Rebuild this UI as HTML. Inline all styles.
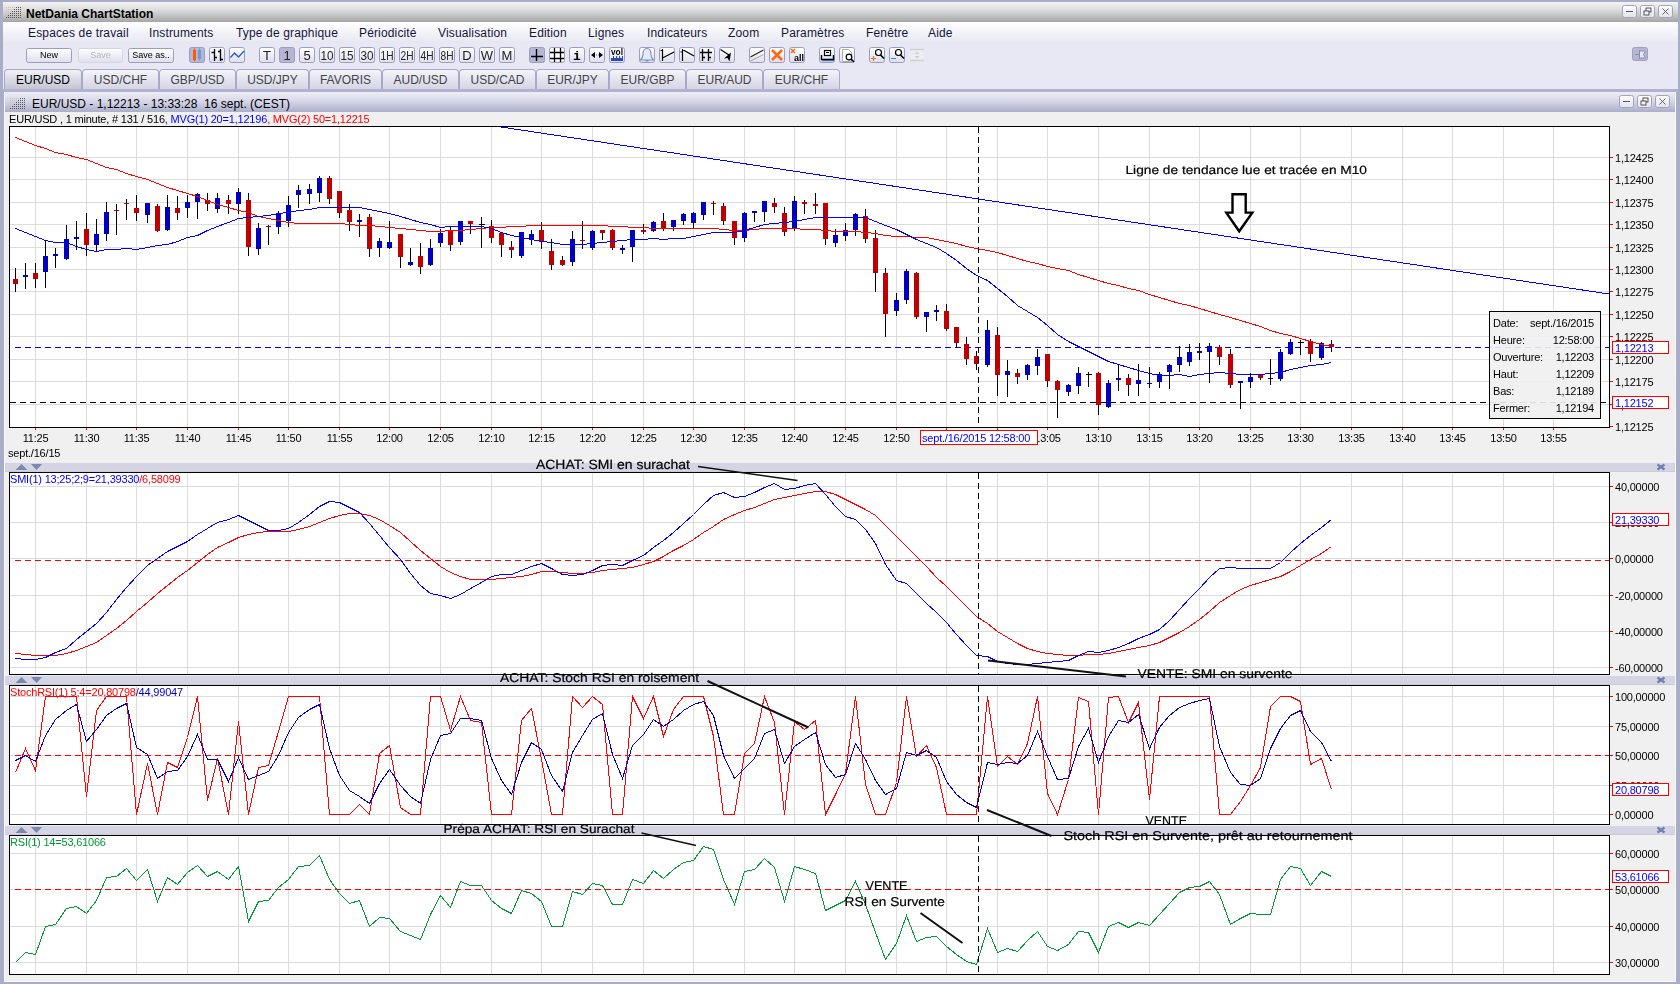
<!DOCTYPE html>
<html><head><meta charset="utf-8"><title>NetDania ChartStation</title>
<style>
html,body{margin:0;padding:0}
body{width:1680px;height:984px;position:relative;overflow:hidden;background:#a9adc8;font-family:"Liberation Sans",Arial,sans-serif}
#title{position:absolute;left:3px;top:2px;width:1675px;height:20px;background:linear-gradient(#f4f4f4,#dcdcdc 40%,#a6a6a6)}
#title b{position:absolute;left:23px;top:5px;font-size:12px;color:#000}
#menu{position:absolute;left:3px;top:22px;width:1675px;height:22px;background:linear-gradient(#ffffff,#e6e6f2)}
#menu span{position:absolute;margin-left:-3px;top:4px;font-size:12px;color:#15153a;white-space:nowrap;letter-spacing:0.15px}
#tool{position:absolute;left:3px;top:44px;width:1675px;height:48px;background:#e8e8f4}
.tab{position:absolute;top:69px;width:76px;height:20px;box-sizing:border-box;border:1px solid #a9a9c7;border-bottom:none;border-radius:4px 4px 0 0;background:linear-gradient(#f4f4fa,#d4d4e6);font-size:12px;color:#444;text-align:center;line-height:20px}
.tab.act{background:linear-gradient(#f0f0f4,#c4c4d6);color:#000}
#tabline{position:absolute;left:3px;top:89px;width:1675px;height:3px;background:#b0b2d0}
#win{position:absolute;left:4px;top:92px;width:1670px;height:889px;background:#f0f0f0;border:1px solid #f8f8fc;border-top:none}
#wtitle{position:absolute;left:0;top:0;width:1670px;height:20px;background:linear-gradient(#eeeef8,#d4d4e6 50%,#aaaeca)}
#wtitle span{position:absolute;left:27px;top:5px;font-size:12px;color:#000;white-space:pre}
.btn{position:absolute;top:48px;height:14px;box-sizing:border-box;border:1px solid #9c9cba;border-radius:2px;background:linear-gradient(#fff,#e4e4f2);font-size:9px;line-height:12px;text-align:center;color:#000}
.ib{position:absolute;top:47px;width:16px;height:16px;box-sizing:border-box;border:1px solid #a4a4c0;border-radius:2px;background:linear-gradient(#fff,#e0e0ee);font-size:12px;line-height:14px;text-align:center;color:#222}
.ib.sel{background:#b4b4d0;border-color:#9090b0}
</style></head><body>
<div id="title"><b>NetDania ChartStation</b></div>
<div id="menu"><span style="left:28px">Espaces de travail</span><span style="left:149px">Instruments</span><span style="left:236px">Type de graphique</span><span style="left:359px">Périodicité</span><span style="left:438px">Visualisation</span><span style="left:529px">Edition</span><span style="left:588px">Lignes</span><span style="left:647px">Indicateurs</span><span style="left:728px">Zoom</span><span style="left:781px">Paramètres</span><span style="left:866px">Fenêtre</span><span style="left:928px">Aide</span></div>
<div id="tool"></div>
<div class="tab act" style="left:4px;width:78px">EUR/USD</div><div class="tab" style="left:82px;width:77px">USD/CHF</div><div class="tab" style="left:159px;width:77px">GBP/USD</div><div class="tab" style="left:236px;width:73px">USD/JPY</div><div class="tab" style="left:309px;width:73px">FAVORIS</div><div class="tab" style="left:382px;width:77px">AUD/USD</div><div class="tab" style="left:459px;width:77px">USD/CAD</div><div class="tab" style="left:536px;width:73px">EUR/JPY</div><div class="tab" style="left:609px;width:77px">EUR/GBP</div><div class="tab" style="left:686px;width:77px">EUR/AUD</div><div class="tab" style="left:763px;width:77px">EUR/CHF</div>
<div id="tabline"></div>
<div id="win"><div id="wtitle"><span>EUR/USD - 1,12213 - 13:33:28  16 sept. (CEST)</span></div></div>
<svg width="1680" height="984" viewBox="0 0 1680 984" style="position:absolute;left:0;top:0;will-change:transform" shape-rendering="crispEdges" font-family="Liberation Sans, Arial, sans-serif">
<style>.t{font-size:11px;fill:#000;letter-spacing:-0.2px}.an{font-size:12.5px;fill:#000;stroke:#000;stroke-width:0.2px;font-family:"Liberation Sans",sans-serif}</style>
<rect x="9.5" y="126.5" width="1600" height="301" fill="#fff" stroke="none"/>
<line x1="35.5" y1="127" x2="35.5" y2="427" stroke="#dcdcdc" stroke-width="1"/>
<line x1="86.5" y1="127" x2="86.5" y2="427" stroke="#dcdcdc" stroke-width="1"/>
<line x1="136.5" y1="127" x2="136.5" y2="427" stroke="#dcdcdc" stroke-width="1"/>
<line x1="187.5" y1="127" x2="187.5" y2="427" stroke="#dcdcdc" stroke-width="1"/>
<line x1="238.5" y1="127" x2="238.5" y2="427" stroke="#dcdcdc" stroke-width="1"/>
<line x1="288.5" y1="127" x2="288.5" y2="427" stroke="#dcdcdc" stroke-width="1"/>
<line x1="339.5" y1="127" x2="339.5" y2="427" stroke="#dcdcdc" stroke-width="1"/>
<line x1="389.5" y1="127" x2="389.5" y2="427" stroke="#dcdcdc" stroke-width="1"/>
<line x1="440.5" y1="127" x2="440.5" y2="427" stroke="#dcdcdc" stroke-width="1"/>
<line x1="491.5" y1="127" x2="491.5" y2="427" stroke="#dcdcdc" stroke-width="1"/>
<line x1="541.5" y1="127" x2="541.5" y2="427" stroke="#dcdcdc" stroke-width="1"/>
<line x1="592.5" y1="127" x2="592.5" y2="427" stroke="#dcdcdc" stroke-width="1"/>
<line x1="643.5" y1="127" x2="643.5" y2="427" stroke="#dcdcdc" stroke-width="1"/>
<line x1="693.5" y1="127" x2="693.5" y2="427" stroke="#dcdcdc" stroke-width="1"/>
<line x1="744.5" y1="127" x2="744.5" y2="427" stroke="#dcdcdc" stroke-width="1"/>
<line x1="794.5" y1="127" x2="794.5" y2="427" stroke="#dcdcdc" stroke-width="1"/>
<line x1="845.5" y1="127" x2="845.5" y2="427" stroke="#dcdcdc" stroke-width="1"/>
<line x1="896.5" y1="127" x2="896.5" y2="427" stroke="#dcdcdc" stroke-width="1"/>
<line x1="946.5" y1="127" x2="946.5" y2="427" stroke="#dcdcdc" stroke-width="1"/>
<line x1="997.5" y1="127" x2="997.5" y2="427" stroke="#dcdcdc" stroke-width="1"/>
<line x1="1047.5" y1="127" x2="1047.5" y2="427" stroke="#dcdcdc" stroke-width="1"/>
<line x1="1098.5" y1="127" x2="1098.5" y2="427" stroke="#dcdcdc" stroke-width="1"/>
<line x1="1149.5" y1="127" x2="1149.5" y2="427" stroke="#dcdcdc" stroke-width="1"/>
<line x1="1199.5" y1="127" x2="1199.5" y2="427" stroke="#dcdcdc" stroke-width="1"/>
<line x1="1250.5" y1="127" x2="1250.5" y2="427" stroke="#dcdcdc" stroke-width="1"/>
<line x1="1300.5" y1="127" x2="1300.5" y2="427" stroke="#dcdcdc" stroke-width="1"/>
<line x1="1351.5" y1="127" x2="1351.5" y2="427" stroke="#dcdcdc" stroke-width="1"/>
<line x1="1402.5" y1="127" x2="1402.5" y2="427" stroke="#dcdcdc" stroke-width="1"/>
<line x1="1452.5" y1="127" x2="1452.5" y2="427" stroke="#dcdcdc" stroke-width="1"/>
<line x1="1503.5" y1="127" x2="1503.5" y2="427" stroke="#dcdcdc" stroke-width="1"/>
<line x1="1553.5" y1="127" x2="1553.5" y2="427" stroke="#dcdcdc" stroke-width="1"/>
<line x1="10" y1="157.5" x2="1609" y2="157.5" stroke="#dcdcdc" stroke-width="1"/>
<line x1="10" y1="179.5" x2="1609" y2="179.5" stroke="#dcdcdc" stroke-width="1"/>
<line x1="10" y1="202.5" x2="1609" y2="202.5" stroke="#dcdcdc" stroke-width="1"/>
<line x1="10" y1="224.5" x2="1609" y2="224.5" stroke="#dcdcdc" stroke-width="1"/>
<line x1="10" y1="247.5" x2="1609" y2="247.5" stroke="#dcdcdc" stroke-width="1"/>
<line x1="10" y1="269.5" x2="1609" y2="269.5" stroke="#dcdcdc" stroke-width="1"/>
<line x1="10" y1="291.5" x2="1609" y2="291.5" stroke="#dcdcdc" stroke-width="1"/>
<line x1="10" y1="314.5" x2="1609" y2="314.5" stroke="#dcdcdc" stroke-width="1"/>
<line x1="10" y1="336.5" x2="1609" y2="336.5" stroke="#dcdcdc" stroke-width="1"/>
<line x1="10" y1="359.5" x2="1609" y2="359.5" stroke="#dcdcdc" stroke-width="1"/>
<line x1="10" y1="381.5" x2="1609" y2="381.5" stroke="#dcdcdc" stroke-width="1"/>
<line x1="10" y1="404.5" x2="1609" y2="404.5" stroke="#dcdcdc" stroke-width="1"/>
<line x1="501" y1="127" x2="1609" y2="294" stroke="#0000ff" stroke-width="1"/>
<line x1="15" y1="347.5" x2="1609" y2="347.5" stroke="#0000ff" stroke-width="1" stroke-dasharray="6 4"/>
<line x1="10" y1="402.5" x2="1609" y2="402.5" stroke="#000" stroke-width="1" stroke-dasharray="6 4"/>
<line x1="15.5" y1="268" x2="15.5" y2="292" stroke="#000" stroke-width="1"/>
<rect x="13" y="279" width="5" height="5" fill="#c00000"/>
<line x1="25.5" y1="263" x2="25.5" y2="289" stroke="#000" stroke-width="1"/>
<rect x="23" y="275" width="5" height="2" fill="#0000c0"/>
<line x1="35.5" y1="263" x2="35.5" y2="288" stroke="#000" stroke-width="1"/>
<rect x="33" y="273" width="5" height="6" fill="#c00000"/>
<line x1="45.5" y1="241" x2="45.5" y2="288" stroke="#000" stroke-width="1"/>
<rect x="43" y="256" width="5" height="16" fill="#0000c0"/>
<line x1="55.5" y1="248" x2="55.5" y2="268" stroke="#000" stroke-width="1"/>
<rect x="53" y="254" width="5" height="2" fill="#0000c0"/>
<line x1="66.5" y1="225" x2="66.5" y2="260" stroke="#000" stroke-width="1"/>
<rect x="64" y="239" width="5" height="20" fill="#0000c0"/>
<line x1="76.5" y1="221" x2="76.5" y2="250" stroke="#000" stroke-width="1"/>
<rect x="74" y="237" width="5" height="2" fill="#0000c0"/>
<line x1="86.5" y1="213" x2="86.5" y2="256" stroke="#000" stroke-width="1"/>
<rect x="84" y="229" width="5" height="16" fill="#c00000"/>
<line x1="96.5" y1="219" x2="96.5" y2="252" stroke="#000" stroke-width="1"/>
<rect x="94" y="234" width="5" height="11" fill="#0000c0"/>
<line x1="106.5" y1="202" x2="106.5" y2="241" stroke="#000" stroke-width="1"/>
<rect x="104" y="212" width="5" height="22" fill="#0000c0"/>
<line x1="116.5" y1="204" x2="116.5" y2="235" stroke="#000" stroke-width="1"/>
<rect x="114" y="210" width="5" height="1" fill="#c00000"/>
<line x1="126.5" y1="199" x2="126.5" y2="220" stroke="#000" stroke-width="1"/>
<rect x="124" y="203" width="5" height="1" fill="#c00000"/>
<line x1="136.5" y1="195" x2="136.5" y2="221" stroke="#000" stroke-width="1"/>
<rect x="134" y="208" width="5" height="5" fill="#c00000"/>
<line x1="147.5" y1="203" x2="147.5" y2="223" stroke="#000" stroke-width="1"/>
<rect x="145" y="203" width="5" height="12" fill="#0000c0"/>
<line x1="157.5" y1="204" x2="157.5" y2="232" stroke="#000" stroke-width="1"/>
<rect x="155" y="206" width="5" height="25" fill="#c00000"/>
<line x1="167.5" y1="195" x2="167.5" y2="231" stroke="#000" stroke-width="1"/>
<rect x="165" y="207" width="5" height="23" fill="#0000c0"/>
<line x1="177.5" y1="196" x2="177.5" y2="220" stroke="#000" stroke-width="1"/>
<rect x="175" y="208" width="5" height="5" fill="#c00000"/>
<line x1="187.5" y1="195" x2="187.5" y2="218" stroke="#000" stroke-width="1"/>
<rect x="185" y="202" width="5" height="6" fill="#0000c0"/>
<line x1="197.5" y1="193" x2="197.5" y2="219" stroke="#000" stroke-width="1"/>
<rect x="195" y="194" width="5" height="8" fill="#0000c0"/>
<line x1="207.5" y1="193" x2="207.5" y2="211" stroke="#000" stroke-width="1"/>
<rect x="205" y="200" width="5" height="4" fill="#c00000"/>
<line x1="217.5" y1="193" x2="217.5" y2="213" stroke="#000" stroke-width="1"/>
<rect x="215" y="198" width="5" height="11" fill="#0000c0"/>
<line x1="228.5" y1="195" x2="228.5" y2="214" stroke="#000" stroke-width="1"/>
<rect x="226" y="200" width="5" height="4" fill="#c00000"/>
<line x1="238.5" y1="188" x2="238.5" y2="214" stroke="#000" stroke-width="1"/>
<rect x="236" y="192" width="5" height="12" fill="#0000c0"/>
<line x1="248.5" y1="193" x2="248.5" y2="256" stroke="#000" stroke-width="1"/>
<rect x="246" y="200" width="5" height="47" fill="#c00000"/>
<line x1="258.5" y1="223" x2="258.5" y2="255" stroke="#000" stroke-width="1"/>
<rect x="256" y="228" width="5" height="21" fill="#0000c0"/>
<line x1="268.5" y1="225" x2="268.5" y2="245" stroke="#000" stroke-width="1"/>
<rect x="266" y="226" width="5" height="1" fill="#c00000"/>
<line x1="278.5" y1="211" x2="278.5" y2="234" stroke="#000" stroke-width="1"/>
<rect x="276" y="213" width="5" height="14" fill="#0000c0"/>
<line x1="288.5" y1="196" x2="288.5" y2="227" stroke="#000" stroke-width="1"/>
<rect x="286" y="205" width="5" height="16" fill="#0000c0"/>
<line x1="298.5" y1="185" x2="298.5" y2="208" stroke="#000" stroke-width="1"/>
<rect x="296" y="190" width="5" height="5" fill="#0000c0"/>
<line x1="309.5" y1="184" x2="309.5" y2="204" stroke="#000" stroke-width="1"/>
<rect x="307" y="189" width="5" height="5" fill="#0000c0"/>
<line x1="319.5" y1="176" x2="319.5" y2="202" stroke="#000" stroke-width="1"/>
<rect x="317" y="178" width="5" height="15" fill="#0000c0"/>
<line x1="329.5" y1="176" x2="329.5" y2="204" stroke="#000" stroke-width="1"/>
<rect x="327" y="178" width="5" height="21" fill="#c00000"/>
<line x1="339.5" y1="191" x2="339.5" y2="218" stroke="#000" stroke-width="1"/>
<rect x="337" y="191" width="5" height="22" fill="#c00000"/>
<line x1="349.5" y1="204" x2="349.5" y2="231" stroke="#000" stroke-width="1"/>
<rect x="347" y="210" width="5" height="12" fill="#c00000"/>
<line x1="359.5" y1="214" x2="359.5" y2="237" stroke="#000" stroke-width="1"/>
<rect x="357" y="220" width="5" height="2" fill="#0000c0"/>
<line x1="369.5" y1="214" x2="369.5" y2="257" stroke="#000" stroke-width="1"/>
<rect x="367" y="217" width="5" height="32" fill="#c00000"/>
<line x1="379.5" y1="238" x2="379.5" y2="257" stroke="#000" stroke-width="1"/>
<rect x="377" y="241" width="5" height="7" fill="#0000c0"/>
<line x1="389.5" y1="221" x2="389.5" y2="249" stroke="#000" stroke-width="1"/>
<rect x="387" y="242" width="5" height="6" fill="#0000c0"/>
<line x1="400.5" y1="234" x2="400.5" y2="268" stroke="#000" stroke-width="1"/>
<rect x="398" y="234" width="5" height="23" fill="#c00000"/>
<line x1="410.5" y1="248" x2="410.5" y2="266" stroke="#000" stroke-width="1"/>
<rect x="408" y="262" width="5" height="3" fill="#0000c0"/>
<line x1="420.5" y1="243" x2="420.5" y2="274" stroke="#000" stroke-width="1"/>
<rect x="418" y="256" width="5" height="11" fill="#c00000"/>
<line x1="430.5" y1="239" x2="430.5" y2="266" stroke="#000" stroke-width="1"/>
<rect x="428" y="248" width="5" height="17" fill="#0000c0"/>
<line x1="440.5" y1="229" x2="440.5" y2="247" stroke="#000" stroke-width="1"/>
<rect x="438" y="233" width="5" height="10" fill="#0000c0"/>
<line x1="450.5" y1="226" x2="450.5" y2="251" stroke="#000" stroke-width="1"/>
<rect x="448" y="230" width="5" height="15" fill="#c00000"/>
<line x1="460.5" y1="221" x2="460.5" y2="245" stroke="#000" stroke-width="1"/>
<rect x="458" y="221" width="5" height="21" fill="#0000c0"/>
<line x1="470.5" y1="221" x2="470.5" y2="234" stroke="#000" stroke-width="1"/>
<rect x="468" y="221" width="5" height="3" fill="#c00000"/>
<line x1="481.5" y1="217" x2="481.5" y2="248" stroke="#000" stroke-width="1"/>
<line x1="479" y1="224.5" x2="485" y2="224.5" stroke="#000" stroke-width="1"/>
<line x1="491.5" y1="220" x2="491.5" y2="243" stroke="#000" stroke-width="1"/>
<rect x="489" y="226" width="5" height="12" fill="#c00000"/>
<line x1="501.5" y1="232" x2="501.5" y2="257" stroke="#000" stroke-width="1"/>
<rect x="499" y="233" width="5" height="12" fill="#c00000"/>
<line x1="511.5" y1="241" x2="511.5" y2="258" stroke="#000" stroke-width="1"/>
<rect x="509" y="247" width="5" height="3" fill="#c00000"/>
<line x1="521.5" y1="232" x2="521.5" y2="258" stroke="#000" stroke-width="1"/>
<rect x="519" y="232" width="5" height="24" fill="#0000c0"/>
<line x1="531.5" y1="230" x2="531.5" y2="245" stroke="#000" stroke-width="1"/>
<rect x="529" y="234" width="5" height="6" fill="#0000c0"/>
<line x1="541.5" y1="222" x2="541.5" y2="249" stroke="#000" stroke-width="1"/>
<rect x="539" y="230" width="5" height="12" fill="#c00000"/>
<line x1="551.5" y1="239" x2="551.5" y2="270" stroke="#000" stroke-width="1"/>
<rect x="549" y="251" width="5" height="14" fill="#c00000"/>
<line x1="562.5" y1="256" x2="562.5" y2="266" stroke="#000" stroke-width="1"/>
<rect x="560" y="260" width="5" height="5" fill="#c00000"/>
<line x1="572.5" y1="231" x2="572.5" y2="266" stroke="#000" stroke-width="1"/>
<rect x="570" y="239" width="5" height="23" fill="#0000c0"/>
<line x1="582.5" y1="221" x2="582.5" y2="249" stroke="#000" stroke-width="1"/>
<rect x="580" y="240" width="5" height="1" fill="#c00000"/>
<line x1="592.5" y1="230" x2="592.5" y2="250" stroke="#000" stroke-width="1"/>
<rect x="590" y="231" width="5" height="17" fill="#0000c0"/>
<line x1="602.5" y1="230" x2="602.5" y2="240" stroke="#000" stroke-width="1"/>
<rect x="600" y="230" width="5" height="3" fill="#c00000"/>
<line x1="612.5" y1="229" x2="612.5" y2="250" stroke="#000" stroke-width="1"/>
<rect x="610" y="230" width="5" height="18" fill="#c00000"/>
<line x1="622.5" y1="245" x2="622.5" y2="254" stroke="#000" stroke-width="1"/>
<rect x="620" y="248" width="5" height="2" fill="#0000c0"/>
<line x1="632.5" y1="230" x2="632.5" y2="262" stroke="#000" stroke-width="1"/>
<rect x="630" y="230" width="5" height="17" fill="#0000c0"/>
<line x1="643.5" y1="224" x2="643.5" y2="234" stroke="#000" stroke-width="1"/>
<rect x="641" y="230" width="5" height="2" fill="#c00000"/>
<line x1="653.5" y1="221" x2="653.5" y2="232" stroke="#000" stroke-width="1"/>
<rect x="651" y="222" width="5" height="9" fill="#0000c0"/>
<line x1="663.5" y1="213" x2="663.5" y2="231" stroke="#000" stroke-width="1"/>
<rect x="661" y="221" width="5" height="8" fill="#c00000"/>
<line x1="673.5" y1="220" x2="673.5" y2="231" stroke="#000" stroke-width="1"/>
<rect x="671" y="220" width="5" height="7" fill="#0000c0"/>
<line x1="683.5" y1="213" x2="683.5" y2="225" stroke="#000" stroke-width="1"/>
<rect x="681" y="214" width="5" height="7" fill="#0000c0"/>
<line x1="693.5" y1="212" x2="693.5" y2="228" stroke="#000" stroke-width="1"/>
<rect x="691" y="213" width="5" height="10" fill="#0000c0"/>
<line x1="703.5" y1="202" x2="703.5" y2="220" stroke="#000" stroke-width="1"/>
<rect x="701" y="202" width="5" height="13" fill="#0000c0"/>
<line x1="713.5" y1="201" x2="713.5" y2="215" stroke="#000" stroke-width="1"/>
<rect x="711" y="203" width="5" height="1" fill="#c00000"/>
<line x1="723.5" y1="203" x2="723.5" y2="225" stroke="#000" stroke-width="1"/>
<rect x="721" y="206" width="5" height="15" fill="#c00000"/>
<line x1="734.5" y1="221" x2="734.5" y2="245" stroke="#000" stroke-width="1"/>
<rect x="732" y="221" width="5" height="17" fill="#c00000"/>
<line x1="744.5" y1="212" x2="744.5" y2="242" stroke="#000" stroke-width="1"/>
<rect x="742" y="213" width="5" height="25" fill="#0000c0"/>
<line x1="754.5" y1="211" x2="754.5" y2="222" stroke="#000" stroke-width="1"/>
<rect x="752" y="211" width="5" height="2" fill="#0000c0"/>
<line x1="764.5" y1="201" x2="764.5" y2="222" stroke="#000" stroke-width="1"/>
<rect x="762" y="201" width="5" height="11" fill="#0000c0"/>
<line x1="774.5" y1="198" x2="774.5" y2="213" stroke="#000" stroke-width="1"/>
<rect x="772" y="203" width="5" height="4" fill="#c00000"/>
<line x1="784.5" y1="207" x2="784.5" y2="236" stroke="#000" stroke-width="1"/>
<rect x="782" y="213" width="5" height="19" fill="#c00000"/>
<line x1="794.5" y1="196" x2="794.5" y2="231" stroke="#000" stroke-width="1"/>
<rect x="792" y="201" width="5" height="27" fill="#0000c0"/>
<line x1="804.5" y1="200" x2="804.5" y2="214" stroke="#000" stroke-width="1"/>
<rect x="802" y="202" width="5" height="2" fill="#c00000"/>
<line x1="815.5" y1="193" x2="815.5" y2="214" stroke="#000" stroke-width="1"/>
<rect x="813" y="204" width="5" height="2" fill="#c00000"/>
<line x1="825.5" y1="203" x2="825.5" y2="245" stroke="#000" stroke-width="1"/>
<rect x="823" y="203" width="5" height="36" fill="#c00000"/>
<line x1="835.5" y1="229" x2="835.5" y2="247" stroke="#000" stroke-width="1"/>
<rect x="833" y="235" width="5" height="8" fill="#0000c0"/>
<line x1="845.5" y1="223" x2="845.5" y2="241" stroke="#000" stroke-width="1"/>
<rect x="843" y="230" width="5" height="6" fill="#0000c0"/>
<line x1="855.5" y1="213" x2="855.5" y2="236" stroke="#000" stroke-width="1"/>
<rect x="853" y="214" width="5" height="16" fill="#0000c0"/>
<line x1="865.5" y1="209" x2="865.5" y2="243" stroke="#000" stroke-width="1"/>
<rect x="863" y="216" width="5" height="23" fill="#c00000"/>
<line x1="875.5" y1="230" x2="875.5" y2="292" stroke="#000" stroke-width="1"/>
<rect x="873" y="238" width="5" height="35" fill="#c00000"/>
<line x1="885.5" y1="268" x2="885.5" y2="337" stroke="#000" stroke-width="1"/>
<rect x="883" y="273" width="5" height="41" fill="#c00000"/>
<line x1="896.5" y1="293" x2="896.5" y2="316" stroke="#000" stroke-width="1"/>
<rect x="894" y="300" width="5" height="11" fill="#0000c0"/>
<line x1="906.5" y1="269" x2="906.5" y2="304" stroke="#000" stroke-width="1"/>
<rect x="904" y="271" width="5" height="29" fill="#0000c0"/>
<line x1="916.5" y1="272" x2="916.5" y2="319" stroke="#000" stroke-width="1"/>
<rect x="914" y="273" width="5" height="44" fill="#c00000"/>
<line x1="926.5" y1="312" x2="926.5" y2="332" stroke="#000" stroke-width="1"/>
<rect x="924" y="312" width="5" height="5" fill="#0000c0"/>
<line x1="936.5" y1="305" x2="936.5" y2="321" stroke="#000" stroke-width="1"/>
<rect x="934" y="310" width="5" height="2" fill="#0000c0"/>
<line x1="946.5" y1="304" x2="946.5" y2="331" stroke="#000" stroke-width="1"/>
<rect x="944" y="311" width="5" height="18" fill="#c00000"/>
<line x1="956.5" y1="327" x2="956.5" y2="348" stroke="#000" stroke-width="1"/>
<rect x="954" y="327" width="5" height="16" fill="#c00000"/>
<line x1="966.5" y1="337" x2="966.5" y2="365" stroke="#000" stroke-width="1"/>
<rect x="964" y="344" width="5" height="15" fill="#c00000"/>
<line x1="976.5" y1="351" x2="976.5" y2="370" stroke="#000" stroke-width="1"/>
<rect x="974" y="356" width="5" height="8" fill="#c00000"/>
<line x1="987.5" y1="320" x2="987.5" y2="367" stroke="#000" stroke-width="1"/>
<rect x="985" y="330" width="5" height="35" fill="#0000c0"/>
<line x1="997.5" y1="327" x2="997.5" y2="396" stroke="#000" stroke-width="1"/>
<rect x="995" y="335" width="5" height="40" fill="#c00000"/>
<line x1="1007.5" y1="360" x2="1007.5" y2="397" stroke="#000" stroke-width="1"/>
<rect x="1005" y="371" width="5" height="4" fill="#0000c0"/>
<line x1="1017.5" y1="369" x2="1017.5" y2="384" stroke="#000" stroke-width="1"/>
<rect x="1015" y="373" width="5" height="4" fill="#c00000"/>
<line x1="1027.5" y1="364" x2="1027.5" y2="380" stroke="#000" stroke-width="1"/>
<rect x="1025" y="365" width="5" height="10" fill="#0000c0"/>
<line x1="1037.5" y1="349" x2="1037.5" y2="375" stroke="#000" stroke-width="1"/>
<rect x="1035" y="357" width="5" height="9" fill="#0000c0"/>
<line x1="1047.5" y1="354" x2="1047.5" y2="387" stroke="#000" stroke-width="1"/>
<rect x="1045" y="354" width="5" height="27" fill="#c00000"/>
<line x1="1057.5" y1="380" x2="1057.5" y2="418" stroke="#000" stroke-width="1"/>
<rect x="1055" y="381" width="5" height="9" fill="#c00000"/>
<line x1="1068.5" y1="384" x2="1068.5" y2="396" stroke="#000" stroke-width="1"/>
<rect x="1066" y="385" width="5" height="7" fill="#0000c0"/>
<line x1="1078.5" y1="367" x2="1078.5" y2="394" stroke="#000" stroke-width="1"/>
<rect x="1076" y="373" width="5" height="13" fill="#0000c0"/>
<line x1="1088.5" y1="372" x2="1088.5" y2="387" stroke="#000" stroke-width="1"/>
<line x1="1086" y1="374.5" x2="1092" y2="374.5" stroke="#000" stroke-width="1"/>
<line x1="1098.5" y1="372" x2="1098.5" y2="415" stroke="#000" stroke-width="1"/>
<rect x="1096" y="373" width="5" height="32" fill="#c00000"/>
<line x1="1108.5" y1="380" x2="1108.5" y2="408" stroke="#000" stroke-width="1"/>
<rect x="1106" y="383" width="5" height="24" fill="#0000c0"/>
<line x1="1118.5" y1="365" x2="1118.5" y2="391" stroke="#000" stroke-width="1"/>
<rect x="1116" y="378" width="5" height="2" fill="#0000c0"/>
<line x1="1128.5" y1="374" x2="1128.5" y2="396" stroke="#000" stroke-width="1"/>
<rect x="1126" y="378" width="5" height="7" fill="#c00000"/>
<line x1="1138.5" y1="364" x2="1138.5" y2="396" stroke="#000" stroke-width="1"/>
<rect x="1136" y="380" width="5" height="4" fill="#0000c0"/>
<line x1="1149.5" y1="367" x2="1149.5" y2="388" stroke="#000" stroke-width="1"/>
<rect x="1147" y="383" width="5" height="1" fill="#0000c0"/>
<line x1="1159.5" y1="372" x2="1159.5" y2="388" stroke="#000" stroke-width="1"/>
<rect x="1157" y="374" width="5" height="8" fill="#0000c0"/>
<line x1="1169.5" y1="364" x2="1169.5" y2="389" stroke="#000" stroke-width="1"/>
<rect x="1167" y="365" width="5" height="7" fill="#0000c0"/>
<line x1="1179.5" y1="346" x2="1179.5" y2="372" stroke="#000" stroke-width="1"/>
<rect x="1177" y="357" width="5" height="8" fill="#0000c0"/>
<line x1="1189.5" y1="344" x2="1189.5" y2="366" stroke="#000" stroke-width="1"/>
<rect x="1187" y="352" width="5" height="10" fill="#0000c0"/>
<line x1="1199.5" y1="343" x2="1199.5" y2="360" stroke="#000" stroke-width="1"/>
<rect x="1197" y="351" width="5" height="2" fill="#0000c0"/>
<line x1="1209.5" y1="343" x2="1209.5" y2="383" stroke="#000" stroke-width="1"/>
<rect x="1207" y="346" width="5" height="6" fill="#0000c0"/>
<line x1="1219.5" y1="345" x2="1219.5" y2="365" stroke="#000" stroke-width="1"/>
<rect x="1217" y="347" width="5" height="10" fill="#c00000"/>
<line x1="1230.5" y1="349" x2="1230.5" y2="388" stroke="#000" stroke-width="1"/>
<rect x="1228" y="354" width="5" height="31" fill="#c00000"/>
<line x1="1240.5" y1="381" x2="1240.5" y2="409" stroke="#000" stroke-width="1"/>
<rect x="1238" y="381" width="5" height="2" fill="#0000c0"/>
<line x1="1250.5" y1="373" x2="1250.5" y2="388" stroke="#000" stroke-width="1"/>
<rect x="1248" y="377" width="5" height="5" fill="#0000c0"/>
<line x1="1260.5" y1="374" x2="1260.5" y2="380" stroke="#000" stroke-width="1"/>
<rect x="1258" y="375" width="5" height="3" fill="#c00000"/>
<line x1="1270.5" y1="359" x2="1270.5" y2="385" stroke="#000" stroke-width="1"/>
<rect x="1268" y="378" width="5" height="1" fill="#0000c0"/>
<line x1="1280.5" y1="349" x2="1280.5" y2="381" stroke="#000" stroke-width="1"/>
<rect x="1278" y="352" width="5" height="27" fill="#0000c0"/>
<line x1="1290.5" y1="339" x2="1290.5" y2="355" stroke="#000" stroke-width="1"/>
<rect x="1288" y="342" width="5" height="12" fill="#0000c0"/>
<line x1="1300.5" y1="340" x2="1300.5" y2="355" stroke="#000" stroke-width="1"/>
<line x1="1298" y1="342.5" x2="1304" y2="342.5" stroke="#000" stroke-width="1"/>
<line x1="1310.5" y1="339" x2="1310.5" y2="362" stroke="#000" stroke-width="1"/>
<rect x="1308" y="341" width="5" height="13" fill="#c00000"/>
<line x1="1321.5" y1="342" x2="1321.5" y2="360" stroke="#000" stroke-width="1"/>
<rect x="1319" y="343" width="5" height="15" fill="#0000c0"/>
<line x1="1331.5" y1="340" x2="1331.5" y2="352" stroke="#000" stroke-width="1"/>
<rect x="1329" y="344" width="5" height="3" fill="#c00000"/>
<polyline points="15.5,137.5 25.5,141.5 35.5,145.5 45.5,148.5 55.5,152.5 66.5,154.5 76.5,157.5 86.5,159.5 96.5,163.5 106.5,167.5 116.5,169.5 126.5,173.5 136.5,176.5 147.5,179.5 157.5,183.5 167.5,187.5 177.5,190.5 187.5,193.5 197.5,196.5 207.5,200.5 217.5,204.5 228.5,207.5 238.5,210.5 248.5,212.5 258.5,216.5 268.5,218.5 278.5,220.5 288.5,222.5 298.5,223.5 309.5,223.5 319.5,223.5 329.5,223.5 339.5,223.5 349.5,224.5 359.5,225.5 369.5,225.5 379.5,226.5 389.5,227.5 400.5,228.5 410.5,229.5 420.5,230.5 430.5,231.5 440.5,231.5 450.5,230.5 460.5,230.5 470.5,229.5 481.5,228.5 491.5,227.5 501.5,227.5 511.5,226.5 521.5,226.5 531.5,225.5 541.5,225.5 551.5,225.5 562.5,225.5 572.5,225.5 582.5,225.5 592.5,225.5 602.5,225.5 612.5,226.5 622.5,226.5 632.5,227.5 643.5,227.5 653.5,228.5 663.5,228.5 673.5,228.5 683.5,228.5 693.5,228.5 703.5,228.5 713.5,228.5 723.5,229.5 734.5,230.5 744.5,230.5 754.5,229.5 764.5,228.5 774.5,228.5 784.5,228.5 794.5,228.5 804.5,229.5 815.5,229.5 825.5,230.5 835.5,231.5 845.5,231.5 855.5,231.5 865.5,232.5 875.5,233.5 885.5,235.5 896.5,236.5 906.5,236.5 916.5,237.5 926.5,237.5 936.5,239.5 946.5,241.5 956.5,243.5 966.5,246.5 976.5,248.5 987.5,250.5 997.5,252.5 1007.5,255.5 1017.5,258.5 1027.5,261.5 1037.5,263.5 1047.5,266.5 1057.5,268.5 1068.5,270.5 1078.5,274.5 1088.5,277.5 1098.5,280.5 1108.5,283.5 1118.5,285.5 1128.5,288.5 1138.5,290.5 1149.5,294.5 1159.5,297.5 1169.5,300.5 1179.5,303.5 1189.5,305.5 1199.5,308.5 1209.5,311.5 1219.5,314.5 1230.5,317.5 1240.5,320.5 1250.5,323.5 1260.5,326.5 1270.5,330.5 1280.5,333.5 1290.5,335.5 1300.5,338.5 1310.5,341.5 1321.5,344.5 1331.5,346.5" fill="none" stroke="#ff0000" stroke-width="1"/>
<polyline points="15.5,228.5 25.5,232.5 35.5,236.5 45.5,240.5 55.5,242.5 66.5,242.5 76.5,246.5 86.5,249.5 96.5,251.5 106.5,249.5 116.5,249.5 126.5,248.5 136.5,249.5 147.5,247.5 157.5,245.5 167.5,244.5 177.5,241.5 187.5,237.5 197.5,235.5 207.5,230.5 217.5,226.5 228.5,222.5 238.5,218.5 248.5,217.5 258.5,216.5 268.5,215.5 278.5,213.5 288.5,212.5 298.5,210.5 309.5,209.5 319.5,207.5 329.5,207.5 339.5,207.5 349.5,207.5 359.5,207.5 369.5,209.5 379.5,211.5 389.5,213.5 400.5,216.5 410.5,219.5 420.5,222.5 430.5,224.5 440.5,227.5 450.5,226.5 460.5,226.5 470.5,226.5 481.5,226.5 491.5,228.5 501.5,232.5 511.5,235.5 521.5,237.5 531.5,239.5 541.5,241.5 551.5,242.5 562.5,244.5 572.5,244.5 582.5,244.5 592.5,243.5 602.5,242.5 612.5,241.5 622.5,240.5 632.5,239.5 643.5,239.5 653.5,238.5 663.5,239.5 673.5,238.5 683.5,238.5 693.5,236.5 703.5,234.5 713.5,232.5 723.5,232.5 734.5,232.5 744.5,230.5 754.5,227.5 764.5,224.5 774.5,223.5 784.5,222.5 794.5,221.5 804.5,219.5 815.5,217.5 825.5,217.5 835.5,217.5 845.5,217.5 855.5,217.5 865.5,217.5 875.5,221.5 885.5,225.5 896.5,229.5 906.5,234.5 916.5,239.5 926.5,243.5 936.5,247.5 946.5,253.5 956.5,260.5 966.5,268.5 976.5,275.5 987.5,280.5 997.5,288.5 1007.5,296.5 1017.5,305.5 1027.5,311.5 1037.5,317.5 1047.5,325.5 1057.5,334.5 1068.5,341.5 1078.5,346.5 1088.5,351.5 1098.5,356.5 1108.5,361.5 1118.5,364.5 1128.5,367.5 1138.5,370.5 1149.5,373.5 1159.5,375.5 1169.5,375.5 1179.5,374.5 1189.5,376.5 1199.5,374.5 1209.5,373.5 1219.5,372.5 1230.5,373.5 1240.5,374.5 1250.5,374.5 1260.5,374.5 1270.5,373.5 1280.5,372.5 1290.5,369.5 1300.5,367.5 1310.5,365.5 1321.5,364.5 1331.5,362.5" fill="none" stroke="#0000ff" stroke-width="1"/>
<line x1="978.5" y1="127" x2="978.5" y2="424" stroke="#000" stroke-width="1" stroke-dasharray="6 4"/>
<rect x="9.5" y="126.5" width="1600" height="301" fill="none" stroke="#000"/>
<line x1="35.5" y1="428" x2="35.5" y2="430" stroke="#ff0000" stroke-width="1"/>
<text x="35.5" y="442" class="t" text-anchor="middle">11:25</text>
<line x1="86.5" y1="428" x2="86.5" y2="430" stroke="#ff0000" stroke-width="1"/>
<text x="86.5" y="442" class="t" text-anchor="middle">11:30</text>
<line x1="136.5" y1="428" x2="136.5" y2="430" stroke="#ff0000" stroke-width="1"/>
<text x="136.5" y="442" class="t" text-anchor="middle">11:35</text>
<line x1="187.5" y1="428" x2="187.5" y2="430" stroke="#ff0000" stroke-width="1"/>
<text x="187.5" y="442" class="t" text-anchor="middle">11:40</text>
<line x1="238.5" y1="428" x2="238.5" y2="430" stroke="#ff0000" stroke-width="1"/>
<text x="238.5" y="442" class="t" text-anchor="middle">11:45</text>
<line x1="288.5" y1="428" x2="288.5" y2="430" stroke="#ff0000" stroke-width="1"/>
<text x="288.5" y="442" class="t" text-anchor="middle">11:50</text>
<line x1="339.5" y1="428" x2="339.5" y2="430" stroke="#ff0000" stroke-width="1"/>
<text x="339.5" y="442" class="t" text-anchor="middle">11:55</text>
<line x1="389.5" y1="428" x2="389.5" y2="430" stroke="#ff0000" stroke-width="1"/>
<text x="389.5" y="442" class="t" text-anchor="middle">12:00</text>
<line x1="440.5" y1="428" x2="440.5" y2="430" stroke="#ff0000" stroke-width="1"/>
<text x="440.5" y="442" class="t" text-anchor="middle">12:05</text>
<line x1="491.5" y1="428" x2="491.5" y2="430" stroke="#ff0000" stroke-width="1"/>
<text x="491.5" y="442" class="t" text-anchor="middle">12:10</text>
<line x1="541.5" y1="428" x2="541.5" y2="430" stroke="#ff0000" stroke-width="1"/>
<text x="541.5" y="442" class="t" text-anchor="middle">12:15</text>
<line x1="592.5" y1="428" x2="592.5" y2="430" stroke="#ff0000" stroke-width="1"/>
<text x="592.5" y="442" class="t" text-anchor="middle">12:20</text>
<line x1="643.5" y1="428" x2="643.5" y2="430" stroke="#ff0000" stroke-width="1"/>
<text x="643.5" y="442" class="t" text-anchor="middle">12:25</text>
<line x1="693.5" y1="428" x2="693.5" y2="430" stroke="#ff0000" stroke-width="1"/>
<text x="693.5" y="442" class="t" text-anchor="middle">12:30</text>
<line x1="744.5" y1="428" x2="744.5" y2="430" stroke="#ff0000" stroke-width="1"/>
<text x="744.5" y="442" class="t" text-anchor="middle">12:35</text>
<line x1="794.5" y1="428" x2="794.5" y2="430" stroke="#ff0000" stroke-width="1"/>
<text x="794.5" y="442" class="t" text-anchor="middle">12:40</text>
<line x1="845.5" y1="428" x2="845.5" y2="430" stroke="#ff0000" stroke-width="1"/>
<text x="845.5" y="442" class="t" text-anchor="middle">12:45</text>
<line x1="896.5" y1="428" x2="896.5" y2="430" stroke="#ff0000" stroke-width="1"/>
<text x="896.5" y="442" class="t" text-anchor="middle">12:50</text>
<line x1="946.5" y1="428" x2="946.5" y2="430" stroke="#ff0000" stroke-width="1"/>
<text x="946.5" y="442" class="t" text-anchor="middle">12:55</text>
<line x1="997.5" y1="428" x2="997.5" y2="430" stroke="#ff0000" stroke-width="1"/>
<text x="997.5" y="442" class="t" text-anchor="middle">13:00</text>
<line x1="1047.5" y1="428" x2="1047.5" y2="430" stroke="#ff0000" stroke-width="1"/>
<text x="1047.5" y="442" class="t" text-anchor="middle">13:05</text>
<line x1="1098.5" y1="428" x2="1098.5" y2="430" stroke="#ff0000" stroke-width="1"/>
<text x="1098.5" y="442" class="t" text-anchor="middle">13:10</text>
<line x1="1149.5" y1="428" x2="1149.5" y2="430" stroke="#ff0000" stroke-width="1"/>
<text x="1149.5" y="442" class="t" text-anchor="middle">13:15</text>
<line x1="1199.5" y1="428" x2="1199.5" y2="430" stroke="#ff0000" stroke-width="1"/>
<text x="1199.5" y="442" class="t" text-anchor="middle">13:20</text>
<line x1="1250.5" y1="428" x2="1250.5" y2="430" stroke="#ff0000" stroke-width="1"/>
<text x="1250.5" y="442" class="t" text-anchor="middle">13:25</text>
<line x1="1300.5" y1="428" x2="1300.5" y2="430" stroke="#ff0000" stroke-width="1"/>
<text x="1300.5" y="442" class="t" text-anchor="middle">13:30</text>
<line x1="1351.5" y1="428" x2="1351.5" y2="430" stroke="#ff0000" stroke-width="1"/>
<text x="1351.5" y="442" class="t" text-anchor="middle">13:35</text>
<line x1="1402.5" y1="428" x2="1402.5" y2="430" stroke="#ff0000" stroke-width="1"/>
<text x="1402.5" y="442" class="t" text-anchor="middle">13:40</text>
<line x1="1452.5" y1="428" x2="1452.5" y2="430" stroke="#ff0000" stroke-width="1"/>
<text x="1452.5" y="442" class="t" text-anchor="middle">13:45</text>
<line x1="1503.5" y1="428" x2="1503.5" y2="430" stroke="#ff0000" stroke-width="1"/>
<text x="1503.5" y="442" class="t" text-anchor="middle">13:50</text>
<line x1="1553.5" y1="428" x2="1553.5" y2="430" stroke="#ff0000" stroke-width="1"/>
<text x="1553.5" y="442" class="t" text-anchor="middle">13:55</text>
<text x="8" y="457" class="t">sept./16/15</text>
<rect x="920.5" y="430.5" width="117" height="14" fill="#fff" stroke="#ff0000"/>
<text x="922" y="442" class="t" fill="#0000ff" style="fill:#0000ff">sept./16/2015 12:58:00</text>
<line x1="1610" y1="157.5" x2="1613" y2="157.5" stroke="#ff0000" stroke-width="1"/>
<text x="1615" y="162" class="t">1,12425</text>
<line x1="1610" y1="179.5" x2="1613" y2="179.5" stroke="#ff0000" stroke-width="1"/>
<text x="1615" y="184" class="t">1,12400</text>
<line x1="1610" y1="202.5" x2="1613" y2="202.5" stroke="#ff0000" stroke-width="1"/>
<text x="1615" y="207" class="t">1,12375</text>
<line x1="1610" y1="224.5" x2="1613" y2="224.5" stroke="#ff0000" stroke-width="1"/>
<text x="1615" y="229" class="t">1,12350</text>
<line x1="1610" y1="247.5" x2="1613" y2="247.5" stroke="#ff0000" stroke-width="1"/>
<text x="1615" y="252" class="t">1,12325</text>
<line x1="1610" y1="269.5" x2="1613" y2="269.5" stroke="#ff0000" stroke-width="1"/>
<text x="1615" y="274" class="t">1,12300</text>
<line x1="1610" y1="291.5" x2="1613" y2="291.5" stroke="#ff0000" stroke-width="1"/>
<text x="1615" y="296" class="t">1,12275</text>
<line x1="1610" y1="314.5" x2="1613" y2="314.5" stroke="#ff0000" stroke-width="1"/>
<text x="1615" y="319" class="t">1,12250</text>
<line x1="1610" y1="336.5" x2="1613" y2="336.5" stroke="#ff0000" stroke-width="1"/>
<text x="1615" y="341" class="t">1,12225</text>
<line x1="1610" y1="359.5" x2="1613" y2="359.5" stroke="#ff0000" stroke-width="1"/>
<text x="1615" y="364" class="t">1,12200</text>
<line x1="1610" y1="381.5" x2="1613" y2="381.5" stroke="#ff0000" stroke-width="1"/>
<text x="1615" y="386" class="t">1,12175</text>
<line x1="1610" y1="404.5" x2="1613" y2="404.5" stroke="#ff0000" stroke-width="1"/>
<text x="1615" y="409" class="t">1,12150</text>
<line x1="1610" y1="426.5" x2="1613" y2="426.5" stroke="#ff0000" stroke-width="1"/>
<text x="1615" y="431" class="t">1,12125</text>
<rect x="1612.5" y="341.5" width="56" height="12" fill="#fff" stroke="#ff0000"/>
<text x="1615" y="352" class="t" style="fill:#0000ff">1,12213</text>
<rect x="1612.5" y="396.5" width="56" height="12" fill="#fff" stroke="#ff0000"/>
<text x="1615" y="407" class="t" style="fill:#0000ff">1,12152</text>
<text x="9" y="123" class="t">EUR/USD , 1 minute, # 131 / 516<tspan fill="#0000ff" style="fill:#0000ff">, MVG(1) 20=1,12196</tspan><tspan style="fill:#ff0000">, MVG(2) 50=1,12215</tspan></text>
<rect x="1489.5" y="311.5" width="111" height="107" fill="#f0f0f0" fill-opacity="0.9" stroke="#000"/>
<text x="1493" y="327" class="t">Date:</text><text x="1594" y="327" class="t" text-anchor="end">sept./16/2015</text>
<text x="1493" y="344" class="t">Heure:</text><text x="1594" y="344" class="t" text-anchor="end">12:58:00</text>
<text x="1493" y="361" class="t">Ouverture:</text><text x="1594" y="361" class="t" text-anchor="end">1,12203</text>
<text x="1493" y="378" class="t">Haut:</text><text x="1594" y="378" class="t" text-anchor="end">1,12209</text>
<text x="1493" y="395" class="t">Bas:</text><text x="1594" y="395" class="t" text-anchor="end">1,12189</text>
<text x="1493" y="412" class="t">Fermer:</text><text x="1594" y="412" class="t" text-anchor="end">1,12194</text>
<path d="M1232.5 194.2 H1245.7 V212.6 H1252.3 L1239.2 231.3 L1226.3 212.6 H1232.5 Z" fill="#fff" stroke="#000" stroke-width="2.4" shape-rendering="geometricPrecision"/>
<rect x="5" y="462" width="1670" height="1" fill="#eeeefa"/>
<rect x="5" y="463" width="1670" height="9" fill="#d4d4e2"/>
<rect x="5" y="471" width="1670" height="1" fill="#cacada"/>
<path d="M15.5 470 L21.5 464 L27.5 470 z M31 464 L42 464 L36.5 470 z" fill="#7888b0" shape-rendering="geometricPrecision"/>
<path d="M1657.5 464.5 L1664.5 469.5 M1657.5 469.5 L1664.5 464.5" stroke="#6a80b0" stroke-width="2.2" fill="none" shape-rendering="geometricPrecision"/>
<rect x="5" y="675" width="1670" height="1" fill="#eeeefa"/>
<rect x="5" y="676" width="1670" height="9" fill="#d4d4e2"/>
<rect x="5" y="684" width="1670" height="1" fill="#cacada"/>
<path d="M15.5 683 L21.5 677 L27.5 683 z M31 677 L42 677 L36.5 683 z" fill="#7888b0" shape-rendering="geometricPrecision"/>
<path d="M1657.5 677.5 L1664.5 682.5 M1657.5 682.5 L1664.5 677.5" stroke="#6a80b0" stroke-width="2.2" fill="none" shape-rendering="geometricPrecision"/>
<rect x="5" y="825" width="1670" height="1" fill="#eeeefa"/>
<rect x="5" y="826" width="1670" height="9" fill="#d4d4e2"/>
<rect x="5" y="834" width="1670" height="1" fill="#cacada"/>
<path d="M15.5 833 L21.5 827 L27.5 833 z M31 827 L42 827 L36.5 833 z" fill="#7888b0" shape-rendering="geometricPrecision"/>
<path d="M1657.5 827.5 L1664.5 832.5 M1657.5 832.5 L1664.5 827.5" stroke="#6a80b0" stroke-width="2.2" fill="none" shape-rendering="geometricPrecision"/>
<rect x="9.5" y="472.5" width="1600" height="202" fill="#fff" stroke="none"/>
<line x1="35.5" y1="473" x2="35.5" y2="674" stroke="#dcdcdc" stroke-width="1"/>
<line x1="86.5" y1="473" x2="86.5" y2="674" stroke="#dcdcdc" stroke-width="1"/>
<line x1="136.5" y1="473" x2="136.5" y2="674" stroke="#dcdcdc" stroke-width="1"/>
<line x1="187.5" y1="473" x2="187.5" y2="674" stroke="#dcdcdc" stroke-width="1"/>
<line x1="238.5" y1="473" x2="238.5" y2="674" stroke="#dcdcdc" stroke-width="1"/>
<line x1="288.5" y1="473" x2="288.5" y2="674" stroke="#dcdcdc" stroke-width="1"/>
<line x1="339.5" y1="473" x2="339.5" y2="674" stroke="#dcdcdc" stroke-width="1"/>
<line x1="389.5" y1="473" x2="389.5" y2="674" stroke="#dcdcdc" stroke-width="1"/>
<line x1="440.5" y1="473" x2="440.5" y2="674" stroke="#dcdcdc" stroke-width="1"/>
<line x1="491.5" y1="473" x2="491.5" y2="674" stroke="#dcdcdc" stroke-width="1"/>
<line x1="541.5" y1="473" x2="541.5" y2="674" stroke="#dcdcdc" stroke-width="1"/>
<line x1="592.5" y1="473" x2="592.5" y2="674" stroke="#dcdcdc" stroke-width="1"/>
<line x1="643.5" y1="473" x2="643.5" y2="674" stroke="#dcdcdc" stroke-width="1"/>
<line x1="693.5" y1="473" x2="693.5" y2="674" stroke="#dcdcdc" stroke-width="1"/>
<line x1="744.5" y1="473" x2="744.5" y2="674" stroke="#dcdcdc" stroke-width="1"/>
<line x1="794.5" y1="473" x2="794.5" y2="674" stroke="#dcdcdc" stroke-width="1"/>
<line x1="845.5" y1="473" x2="845.5" y2="674" stroke="#dcdcdc" stroke-width="1"/>
<line x1="896.5" y1="473" x2="896.5" y2="674" stroke="#dcdcdc" stroke-width="1"/>
<line x1="946.5" y1="473" x2="946.5" y2="674" stroke="#dcdcdc" stroke-width="1"/>
<line x1="997.5" y1="473" x2="997.5" y2="674" stroke="#dcdcdc" stroke-width="1"/>
<line x1="1047.5" y1="473" x2="1047.5" y2="674" stroke="#dcdcdc" stroke-width="1"/>
<line x1="1098.5" y1="473" x2="1098.5" y2="674" stroke="#dcdcdc" stroke-width="1"/>
<line x1="1149.5" y1="473" x2="1149.5" y2="674" stroke="#dcdcdc" stroke-width="1"/>
<line x1="1199.5" y1="473" x2="1199.5" y2="674" stroke="#dcdcdc" stroke-width="1"/>
<line x1="1250.5" y1="473" x2="1250.5" y2="674" stroke="#dcdcdc" stroke-width="1"/>
<line x1="1300.5" y1="473" x2="1300.5" y2="674" stroke="#dcdcdc" stroke-width="1"/>
<line x1="1351.5" y1="473" x2="1351.5" y2="674" stroke="#dcdcdc" stroke-width="1"/>
<line x1="1402.5" y1="473" x2="1402.5" y2="674" stroke="#dcdcdc" stroke-width="1"/>
<line x1="1452.5" y1="473" x2="1452.5" y2="674" stroke="#dcdcdc" stroke-width="1"/>
<line x1="1503.5" y1="473" x2="1503.5" y2="674" stroke="#dcdcdc" stroke-width="1"/>
<line x1="1553.5" y1="473" x2="1553.5" y2="674" stroke="#dcdcdc" stroke-width="1"/>
<line x1="10" y1="486.5" x2="1609" y2="486.5" stroke="#dcdcdc" stroke-width="1"/>
<line x1="10" y1="522.5" x2="1609" y2="522.5" stroke="#dcdcdc" stroke-width="1"/>
<line x1="10" y1="558.5" x2="1609" y2="558.5" stroke="#dcdcdc" stroke-width="1"/>
<line x1="10" y1="595.5" x2="1609" y2="595.5" stroke="#dcdcdc" stroke-width="1"/>
<line x1="10" y1="631.5" x2="1609" y2="631.5" stroke="#dcdcdc" stroke-width="1"/>
<line x1="10" y1="667.5" x2="1609" y2="667.5" stroke="#dcdcdc" stroke-width="1"/>
<line x1="15" y1="560.5" x2="1609" y2="560.5" stroke="#ff0000" stroke-width="1" stroke-dasharray="6 4"/>
<polyline points="15.5,653.5 25.5,654.5 35.5,655.5 45.5,655.5 55.5,655.5 66.5,653.5 76.5,650.5 86.5,646.5 96.5,642.5 106.5,635.5 116.5,628.5 126.5,620.5 136.5,611.5 147.5,602.5 157.5,593.5 167.5,585.5 177.5,577.5 187.5,570.5 197.5,562.5 207.5,554.5 217.5,547.5 228.5,542.5 238.5,537.5 248.5,534.5 258.5,532.5 268.5,531.5 278.5,531.5 288.5,531.5 298.5,529.5 309.5,526.5 319.5,522.5 329.5,518.5 339.5,515.5 349.5,513.5 359.5,513.5 369.5,515.5 379.5,519.5 389.5,525.5 400.5,532.5 410.5,541.5 420.5,550.5 430.5,558.5 440.5,566.5 450.5,572.5 460.5,576.5 470.5,579.5 481.5,579.5 491.5,579.5 501.5,578.5 511.5,577.5 521.5,576.5 531.5,574.5 541.5,571.5 551.5,571.5 562.5,572.5 572.5,573.5 582.5,573.5 592.5,572.5 602.5,570.5 612.5,569.5 622.5,568.5 632.5,567.5 643.5,564.5 653.5,561.5 663.5,556.5 673.5,550.5 683.5,545.5 693.5,539.5 703.5,532.5 713.5,526.5 723.5,519.5 734.5,514.5 744.5,510.5 754.5,507.5 764.5,503.5 774.5,499.5 784.5,497.5 794.5,495.5 804.5,493.5 815.5,491.5 825.5,491.5 835.5,494.5 845.5,499.5 855.5,504.5 865.5,509.5 875.5,515.5 885.5,525.5 896.5,536.5 906.5,546.5 916.5,556.5 926.5,566.5 936.5,577.5 946.5,586.5 956.5,596.5 966.5,606.5 976.5,616.5 987.5,623.5 997.5,631.5 1007.5,637.5 1017.5,643.5 1027.5,648.5 1037.5,651.5 1047.5,653.5 1057.5,654.5 1068.5,655.5 1078.5,655.5 1088.5,654.5 1098.5,654.5 1108.5,653.5 1118.5,651.5 1128.5,649.5 1138.5,647.5 1149.5,645.5 1159.5,642.5 1169.5,637.5 1179.5,632.5 1189.5,626.5 1199.5,619.5 1209.5,611.5 1219.5,602.5 1230.5,595.5 1240.5,589.5 1250.5,585.5 1260.5,582.5 1270.5,579.5 1280.5,576.5 1290.5,571.5 1300.5,565.5 1310.5,559.5 1321.5,553.5 1331.5,546.5" fill="none" stroke="#ff0000" stroke-width="1"/>
<polyline points="15.5,658.5 25.5,659.5 35.5,659.5 45.5,657.5 55.5,652.5 66.5,648.5 76.5,639.5 86.5,631.5 96.5,623.5 106.5,612.5 116.5,599.5 126.5,587.5 136.5,576.5 147.5,565.5 157.5,558.5 167.5,551.5 177.5,546.5 187.5,541.5 197.5,534.5 207.5,528.5 217.5,522.5 228.5,519.5 238.5,515.5 248.5,520.5 258.5,525.5 268.5,530.5 278.5,530.5 288.5,528.5 298.5,522.5 309.5,514.5 319.5,506.5 329.5,501.5 339.5,502.5 349.5,507.5 359.5,512.5 369.5,523.5 379.5,535.5 389.5,547.5 400.5,559.5 410.5,573.5 420.5,585.5 430.5,593.5 440.5,595.5 450.5,598.5 460.5,594.5 470.5,588.5 481.5,582.5 491.5,576.5 501.5,574.5 511.5,574.5 521.5,570.5 531.5,566.5 541.5,563.5 551.5,568.5 562.5,574.5 572.5,575.5 582.5,574.5 592.5,570.5 602.5,565.5 612.5,564.5 622.5,565.5 632.5,560.5 643.5,555.5 653.5,547.5 663.5,540.5 673.5,532.5 683.5,523.5 693.5,514.5 703.5,504.5 713.5,495.5 723.5,492.5 734.5,497.5 744.5,496.5 754.5,492.5 764.5,487.5 774.5,483.5 784.5,489.5 794.5,488.5 804.5,485.5 815.5,483.5 825.5,494.5 835.5,506.5 845.5,516.5 855.5,519.5 865.5,529.5 875.5,543.5 885.5,564.5 896.5,580.5 906.5,583.5 916.5,593.5 926.5,603.5 936.5,612.5 946.5,622.5 956.5,634.5 966.5,645.5 976.5,655.5 987.5,656.5 997.5,661.5 1007.5,663.5 1017.5,664.5 1027.5,664.5 1037.5,663.5 1047.5,662.5 1057.5,661.5 1068.5,660.5 1078.5,655.5 1088.5,651.5 1098.5,652.5 1108.5,650.5 1118.5,647.5 1128.5,643.5 1138.5,638.5 1149.5,634.5 1159.5,629.5 1169.5,620.5 1179.5,609.5 1189.5,598.5 1199.5,588.5 1209.5,577.5 1219.5,568.5 1230.5,567.5 1240.5,568.5 1250.5,568.5 1260.5,568.5 1270.5,568.5 1280.5,562.5 1290.5,552.5 1300.5,543.5 1310.5,535.5 1321.5,527.5 1331.5,519.5" fill="none" stroke="#0000ff" stroke-width="1"/>
<line x1="978.5" y1="473" x2="978.5" y2="674" stroke="#000" stroke-width="1" stroke-dasharray="6 4"/>
<rect x="9.5" y="472.5" width="1600" height="202" fill="none" stroke="#000"/>
<line x1="1610" y1="486.5" x2="1613" y2="486.5" stroke="#ff0000" stroke-width="1"/>
<text x="1615" y="491" class="t">40,00000</text>
<line x1="1610" y1="522.5" x2="1613" y2="522.5" stroke="#ff0000" stroke-width="1"/>
<text x="1615" y="527" class="t">20,00000</text>
<line x1="1610" y1="558.5" x2="1613" y2="558.5" stroke="#ff0000" stroke-width="1"/>
<text x="1615" y="563" class="t">0,00000</text>
<line x1="1610" y1="595.5" x2="1613" y2="595.5" stroke="#ff0000" stroke-width="1"/>
<text x="1615" y="600" class="t">-20,00000</text>
<line x1="1610" y1="631.5" x2="1613" y2="631.5" stroke="#ff0000" stroke-width="1"/>
<text x="1615" y="636" class="t">-40,00000</text>
<line x1="1610" y1="667.5" x2="1613" y2="667.5" stroke="#ff0000" stroke-width="1"/>
<text x="1615" y="672" class="t">-60,00000</text>
<rect x="1612.5" y="513.5" width="56" height="12" fill="#fff" stroke="#ff0000"/>
<text x="1615" y="524" class="t" style="fill:#0000ff">21,39330</text>
<text x="10" y="483" class="t"><tspan style="fill:#0000ff">SMI(1) 13;25;2;9=21,39330</tspan><tspan style="fill:#ff0000">/6,58099</tspan></text>
<rect x="9.5" y="685.5" width="1600" height="139" fill="#fff" stroke="none"/>
<line x1="35.5" y1="686" x2="35.5" y2="824" stroke="#dcdcdc" stroke-width="1"/>
<line x1="86.5" y1="686" x2="86.5" y2="824" stroke="#dcdcdc" stroke-width="1"/>
<line x1="136.5" y1="686" x2="136.5" y2="824" stroke="#dcdcdc" stroke-width="1"/>
<line x1="187.5" y1="686" x2="187.5" y2="824" stroke="#dcdcdc" stroke-width="1"/>
<line x1="238.5" y1="686" x2="238.5" y2="824" stroke="#dcdcdc" stroke-width="1"/>
<line x1="288.5" y1="686" x2="288.5" y2="824" stroke="#dcdcdc" stroke-width="1"/>
<line x1="339.5" y1="686" x2="339.5" y2="824" stroke="#dcdcdc" stroke-width="1"/>
<line x1="389.5" y1="686" x2="389.5" y2="824" stroke="#dcdcdc" stroke-width="1"/>
<line x1="440.5" y1="686" x2="440.5" y2="824" stroke="#dcdcdc" stroke-width="1"/>
<line x1="491.5" y1="686" x2="491.5" y2="824" stroke="#dcdcdc" stroke-width="1"/>
<line x1="541.5" y1="686" x2="541.5" y2="824" stroke="#dcdcdc" stroke-width="1"/>
<line x1="592.5" y1="686" x2="592.5" y2="824" stroke="#dcdcdc" stroke-width="1"/>
<line x1="643.5" y1="686" x2="643.5" y2="824" stroke="#dcdcdc" stroke-width="1"/>
<line x1="693.5" y1="686" x2="693.5" y2="824" stroke="#dcdcdc" stroke-width="1"/>
<line x1="744.5" y1="686" x2="744.5" y2="824" stroke="#dcdcdc" stroke-width="1"/>
<line x1="794.5" y1="686" x2="794.5" y2="824" stroke="#dcdcdc" stroke-width="1"/>
<line x1="845.5" y1="686" x2="845.5" y2="824" stroke="#dcdcdc" stroke-width="1"/>
<line x1="896.5" y1="686" x2="896.5" y2="824" stroke="#dcdcdc" stroke-width="1"/>
<line x1="946.5" y1="686" x2="946.5" y2="824" stroke="#dcdcdc" stroke-width="1"/>
<line x1="997.5" y1="686" x2="997.5" y2="824" stroke="#dcdcdc" stroke-width="1"/>
<line x1="1047.5" y1="686" x2="1047.5" y2="824" stroke="#dcdcdc" stroke-width="1"/>
<line x1="1098.5" y1="686" x2="1098.5" y2="824" stroke="#dcdcdc" stroke-width="1"/>
<line x1="1149.5" y1="686" x2="1149.5" y2="824" stroke="#dcdcdc" stroke-width="1"/>
<line x1="1199.5" y1="686" x2="1199.5" y2="824" stroke="#dcdcdc" stroke-width="1"/>
<line x1="1250.5" y1="686" x2="1250.5" y2="824" stroke="#dcdcdc" stroke-width="1"/>
<line x1="1300.5" y1="686" x2="1300.5" y2="824" stroke="#dcdcdc" stroke-width="1"/>
<line x1="1351.5" y1="686" x2="1351.5" y2="824" stroke="#dcdcdc" stroke-width="1"/>
<line x1="1402.5" y1="686" x2="1402.5" y2="824" stroke="#dcdcdc" stroke-width="1"/>
<line x1="1452.5" y1="686" x2="1452.5" y2="824" stroke="#dcdcdc" stroke-width="1"/>
<line x1="1503.5" y1="686" x2="1503.5" y2="824" stroke="#dcdcdc" stroke-width="1"/>
<line x1="1553.5" y1="686" x2="1553.5" y2="824" stroke="#dcdcdc" stroke-width="1"/>
<line x1="10" y1="696.5" x2="1609" y2="696.5" stroke="#dcdcdc" stroke-width="1"/>
<line x1="10" y1="726.5" x2="1609" y2="726.5" stroke="#dcdcdc" stroke-width="1"/>
<line x1="10" y1="755.5" x2="1609" y2="755.5" stroke="#dcdcdc" stroke-width="1"/>
<line x1="10" y1="785.5" x2="1609" y2="785.5" stroke="#dcdcdc" stroke-width="1"/>
<line x1="10" y1="814.5" x2="1609" y2="814.5" stroke="#dcdcdc" stroke-width="1"/>
<line x1="15" y1="755.5" x2="1609" y2="755.5" stroke="#ff0000" stroke-width="1" stroke-dasharray="6 4"/>
<polyline points="15.5,772.5 25.5,748.5 35.5,770.5 45.5,696.5 55.5,696.5 66.5,696.5 76.5,696.5 86.5,796.5 96.5,710.5 106.5,696.5 116.5,696.5 126.5,696.5 136.5,814.5 147.5,763.5 157.5,814.5 167.5,762.5 177.5,767.5 187.5,737.5 197.5,696.5 207.5,800.5 217.5,758.5 228.5,814.5 238.5,721.5 248.5,814.5 258.5,767.5 268.5,765.5 278.5,731.5 288.5,696.5 298.5,696.5 309.5,696.5 319.5,696.5 329.5,814.5 339.5,814.5 349.5,814.5 359.5,804.5 369.5,814.5 379.5,753.5 389.5,745.5 400.5,807.5 410.5,814.5 420.5,814.5 430.5,696.5 440.5,696.5 450.5,730.5 460.5,696.5 470.5,720.5 481.5,722.5 491.5,814.5 501.5,814.5 511.5,814.5 521.5,720.5 531.5,708.5 541.5,759.5 551.5,814.5 562.5,814.5 572.5,696.5 582.5,707.5 592.5,696.5 602.5,704.5 612.5,814.5 622.5,814.5 632.5,696.5 643.5,718.5 653.5,696.5 663.5,736.5 673.5,709.5 683.5,696.5 693.5,696.5 703.5,696.5 713.5,736.5 723.5,814.5 734.5,814.5 744.5,753.5 754.5,743.5 764.5,696.5 774.5,722.5 784.5,814.5 794.5,721.5 804.5,729.5 815.5,720.5 825.5,814.5 835.5,794.5 845.5,773.5 855.5,696.5 865.5,784.5 875.5,814.5 885.5,814.5 896.5,782.5 906.5,696.5 916.5,756.5 926.5,745.5 936.5,767.5 946.5,814.5 956.5,814.5 966.5,814.5 976.5,814.5 987.5,696.5 997.5,766.5 1007.5,756.5 1017.5,764.5 1027.5,743.5 1037.5,696.5 1047.5,793.5 1057.5,814.5 1068.5,779.5 1078.5,697.5 1088.5,701.5 1098.5,814.5 1108.5,697.5 1118.5,696.5 1128.5,722.5 1138.5,702.5 1149.5,799.5 1159.5,696.5 1169.5,696.5 1179.5,696.5 1189.5,696.5 1199.5,696.5 1209.5,696.5 1219.5,814.5 1230.5,814.5 1240.5,801.5 1250.5,785.5 1260.5,767.5 1270.5,706.5 1280.5,696.5 1290.5,696.5 1300.5,701.5 1310.5,764.5 1321.5,758.5 1331.5,789.5" fill="none" stroke="#ff0000" stroke-width="1"/>
<polyline points="15.5,760.5 25.5,755.5 35.5,761.5 45.5,735.5 55.5,719.5 66.5,710.5 76.5,704.5 86.5,741.5 96.5,729.5 106.5,715.5 116.5,708.5 126.5,703.5 136.5,747.5 147.5,754.5 157.5,778.5 167.5,771.5 177.5,770.5 187.5,756.5 197.5,734.5 207.5,759.5 217.5,759.5 228.5,781.5 238.5,757.5 248.5,779.5 258.5,775.5 268.5,771.5 278.5,755.5 288.5,732.5 298.5,717.5 309.5,709.5 319.5,704.5 329.5,748.5 339.5,775.5 349.5,790.5 359.5,796.5 369.5,803.5 379.5,783.5 389.5,769.5 400.5,785.5 410.5,796.5 420.5,803.5 430.5,759.5 440.5,735.5 450.5,733.5 460.5,718.5 470.5,718.5 481.5,720.5 491.5,758.5 501.5,780.5 511.5,794.5 521.5,762.5 531.5,742.5 541.5,749.5 551.5,775.5 562.5,791.5 572.5,752.5 582.5,735.5 592.5,719.5 602.5,713.5 612.5,754.5 622.5,778.5 632.5,745.5 643.5,734.5 653.5,719.5 663.5,726.5 673.5,719.5 683.5,710.5 693.5,704.5 703.5,701.5 713.5,715.5 723.5,755.5 734.5,778.5 744.5,768.5 754.5,758.5 764.5,733.5 774.5,729.5 784.5,763.5 794.5,746.5 804.5,739.5 815.5,732.5 825.5,764.5 835.5,777.5 845.5,774.5 855.5,743.5 865.5,759.5 875.5,780.5 885.5,794.5 896.5,788.5 906.5,752.5 916.5,755.5 926.5,750.5 936.5,757.5 946.5,781.5 956.5,794.5 966.5,802.5 976.5,807.5 987.5,762.5 997.5,764.5 1007.5,762.5 1017.5,763.5 1027.5,755.5 1037.5,731.5 1047.5,756.5 1057.5,779.5 1068.5,778.5 1078.5,746.5 1088.5,728.5 1098.5,762.5 1108.5,736.5 1118.5,720.5 1128.5,722.5 1138.5,714.5 1149.5,748.5 1159.5,727.5 1169.5,715.5 1179.5,707.5 1189.5,703.5 1199.5,700.5 1209.5,698.5 1219.5,746.5 1230.5,772.5 1240.5,784.5 1250.5,785.5 1260.5,778.5 1270.5,748.5 1280.5,728.5 1290.5,715.5 1300.5,710.5 1310.5,731.5 1321.5,742.5 1331.5,761.5" fill="none" stroke="#0000c0" stroke-width="1"/>
<line x1="978.5" y1="686" x2="978.5" y2="824" stroke="#000" stroke-width="1" stroke-dasharray="6 4"/>
<rect x="9.5" y="685.5" width="1600" height="139" fill="none" stroke="#000"/>
<line x1="1610" y1="696.5" x2="1613" y2="696.5" stroke="#ff0000" stroke-width="1"/>
<text x="1615" y="701" class="t">100,00000</text>
<line x1="1610" y1="726.5" x2="1613" y2="726.5" stroke="#ff0000" stroke-width="1"/>
<text x="1615" y="731" class="t">75,00000</text>
<line x1="1610" y1="755.5" x2="1613" y2="755.5" stroke="#ff0000" stroke-width="1"/>
<text x="1615" y="760" class="t">50,00000</text>
<line x1="1610" y1="785.5" x2="1613" y2="785.5" stroke="#ff0000" stroke-width="1"/>
<text x="1615" y="790" class="t">25,00000</text>
<line x1="1610" y1="814.5" x2="1613" y2="814.5" stroke="#ff0000" stroke-width="1"/>
<text x="1615" y="819" class="t">0,00000</text>
<rect x="1612.5" y="783.5" width="56" height="12" fill="#fff" stroke="#ff0000"/>
<text x="1615" y="794" class="t" style="fill:#0000ff">20,80798</text>
<text x="10" y="696" class="t"><tspan style="fill:#ff0000">StochRSI(1) 5;4=20,80798</tspan><tspan style="fill:#0000c0">/44,99047</tspan></text>
<rect x="9.5" y="835.5" width="1600" height="139" fill="#fff" stroke="none"/>
<line x1="35.5" y1="836" x2="35.5" y2="974" stroke="#dcdcdc" stroke-width="1"/>
<line x1="86.5" y1="836" x2="86.5" y2="974" stroke="#dcdcdc" stroke-width="1"/>
<line x1="136.5" y1="836" x2="136.5" y2="974" stroke="#dcdcdc" stroke-width="1"/>
<line x1="187.5" y1="836" x2="187.5" y2="974" stroke="#dcdcdc" stroke-width="1"/>
<line x1="238.5" y1="836" x2="238.5" y2="974" stroke="#dcdcdc" stroke-width="1"/>
<line x1="288.5" y1="836" x2="288.5" y2="974" stroke="#dcdcdc" stroke-width="1"/>
<line x1="339.5" y1="836" x2="339.5" y2="974" stroke="#dcdcdc" stroke-width="1"/>
<line x1="389.5" y1="836" x2="389.5" y2="974" stroke="#dcdcdc" stroke-width="1"/>
<line x1="440.5" y1="836" x2="440.5" y2="974" stroke="#dcdcdc" stroke-width="1"/>
<line x1="491.5" y1="836" x2="491.5" y2="974" stroke="#dcdcdc" stroke-width="1"/>
<line x1="541.5" y1="836" x2="541.5" y2="974" stroke="#dcdcdc" stroke-width="1"/>
<line x1="592.5" y1="836" x2="592.5" y2="974" stroke="#dcdcdc" stroke-width="1"/>
<line x1="643.5" y1="836" x2="643.5" y2="974" stroke="#dcdcdc" stroke-width="1"/>
<line x1="693.5" y1="836" x2="693.5" y2="974" stroke="#dcdcdc" stroke-width="1"/>
<line x1="744.5" y1="836" x2="744.5" y2="974" stroke="#dcdcdc" stroke-width="1"/>
<line x1="794.5" y1="836" x2="794.5" y2="974" stroke="#dcdcdc" stroke-width="1"/>
<line x1="845.5" y1="836" x2="845.5" y2="974" stroke="#dcdcdc" stroke-width="1"/>
<line x1="896.5" y1="836" x2="896.5" y2="974" stroke="#dcdcdc" stroke-width="1"/>
<line x1="946.5" y1="836" x2="946.5" y2="974" stroke="#dcdcdc" stroke-width="1"/>
<line x1="997.5" y1="836" x2="997.5" y2="974" stroke="#dcdcdc" stroke-width="1"/>
<line x1="1047.5" y1="836" x2="1047.5" y2="974" stroke="#dcdcdc" stroke-width="1"/>
<line x1="1098.5" y1="836" x2="1098.5" y2="974" stroke="#dcdcdc" stroke-width="1"/>
<line x1="1149.5" y1="836" x2="1149.5" y2="974" stroke="#dcdcdc" stroke-width="1"/>
<line x1="1199.5" y1="836" x2="1199.5" y2="974" stroke="#dcdcdc" stroke-width="1"/>
<line x1="1250.5" y1="836" x2="1250.5" y2="974" stroke="#dcdcdc" stroke-width="1"/>
<line x1="1300.5" y1="836" x2="1300.5" y2="974" stroke="#dcdcdc" stroke-width="1"/>
<line x1="1351.5" y1="836" x2="1351.5" y2="974" stroke="#dcdcdc" stroke-width="1"/>
<line x1="1402.5" y1="836" x2="1402.5" y2="974" stroke="#dcdcdc" stroke-width="1"/>
<line x1="1452.5" y1="836" x2="1452.5" y2="974" stroke="#dcdcdc" stroke-width="1"/>
<line x1="1503.5" y1="836" x2="1503.5" y2="974" stroke="#dcdcdc" stroke-width="1"/>
<line x1="1553.5" y1="836" x2="1553.5" y2="974" stroke="#dcdcdc" stroke-width="1"/>
<line x1="10" y1="853.5" x2="1609" y2="853.5" stroke="#dcdcdc" stroke-width="1"/>
<line x1="10" y1="889.5" x2="1609" y2="889.5" stroke="#dcdcdc" stroke-width="1"/>
<line x1="10" y1="926.5" x2="1609" y2="926.5" stroke="#dcdcdc" stroke-width="1"/>
<line x1="10" y1="962.5" x2="1609" y2="962.5" stroke="#dcdcdc" stroke-width="1"/>
<line x1="15" y1="889.5" x2="1609" y2="889.5" stroke="#ff0000" stroke-width="1" stroke-dasharray="6 4"/>
<polyline points="15.5,962.5 25.5,952.5 35.5,954.5 45.5,926.5 55.5,924.5 66.5,908.5 76.5,906.5 86.5,913.5 96.5,900.5 106.5,877.5 116.5,876.5 126.5,868.5 136.5,880.5 147.5,869.5 157.5,901.5 167.5,877.5 177.5,884.5 187.5,872.5 197.5,865.5 207.5,876.5 217.5,871.5 228.5,879.5 238.5,866.5 248.5,921.5 258.5,901.5 268.5,900.5 278.5,887.5 288.5,879.5 298.5,866.5 309.5,865.5 319.5,855.5 329.5,879.5 339.5,893.5 349.5,903.5 359.5,900.5 369.5,926.5 379.5,917.5 389.5,918.5 400.5,931.5 410.5,935.5 420.5,939.5 430.5,914.5 440.5,895.5 450.5,907.5 460.5,881.5 470.5,885.5 481.5,885.5 491.5,900.5 501.5,908.5 511.5,913.5 521.5,890.5 531.5,893.5 541.5,901.5 551.5,926.5 562.5,926.5 572.5,891.5 582.5,894.5 592.5,883.5 602.5,885.5 612.5,904.5 622.5,904.5 632.5,879.5 643.5,883.5 653.5,870.5 663.5,878.5 673.5,869.5 683.5,862.5 693.5,860.5 703.5,846.5 713.5,849.5 723.5,879.5 734.5,904.5 744.5,871.5 754.5,869.5 764.5,858.5 774.5,867.5 784.5,901.5 794.5,866.5 804.5,869.5 815.5,873.5 825.5,910.5 835.5,905.5 845.5,900.5 855.5,881.5 865.5,904.5 875.5,932.5 885.5,959.5 896.5,943.5 906.5,915.5 916.5,941.5 926.5,937.5 936.5,936.5 946.5,946.5 956.5,954.5 966.5,961.5 976.5,964.5 987.5,928.5 997.5,952.5 1007.5,948.5 1017.5,951.5 1027.5,940.5 1037.5,931.5 1047.5,946.5 1057.5,950.5 1068.5,944.5 1078.5,931.5 1088.5,932.5 1098.5,952.5 1108.5,926.5 1118.5,922.5 1128.5,927.5 1138.5,922.5 1149.5,925.5 1159.5,914.5 1169.5,903.5 1179.5,892.5 1189.5,887.5 1199.5,886.5 1209.5,881.5 1219.5,894.5 1230.5,924.5 1240.5,918.5 1250.5,913.5 1260.5,914.5 1270.5,914.5 1280.5,879.5 1290.5,866.5 1300.5,868.5 1310.5,885.5 1321.5,871.5 1331.5,876.5" fill="none" stroke="#009933" stroke-width="1"/>
<line x1="978.5" y1="836" x2="978.5" y2="974" stroke="#000" stroke-width="1" stroke-dasharray="6 4"/>
<rect x="9.5" y="835.5" width="1600" height="139" fill="none" stroke="#000"/>
<line x1="1610" y1="853.5" x2="1613" y2="853.5" stroke="#ff0000" stroke-width="1"/>
<text x="1615" y="858" class="t">60,00000</text>
<line x1="1610" y1="889.5" x2="1613" y2="889.5" stroke="#ff0000" stroke-width="1"/>
<text x="1615" y="894" class="t">50,00000</text>
<line x1="1610" y1="926.5" x2="1613" y2="926.5" stroke="#ff0000" stroke-width="1"/>
<text x="1615" y="931" class="t">40,00000</text>
<line x1="1610" y1="962.5" x2="1613" y2="962.5" stroke="#ff0000" stroke-width="1"/>
<text x="1615" y="967" class="t">30,00000</text>
<rect x="1612.5" y="870.5" width="56" height="12" fill="#fff" stroke="#ff0000"/>
<text x="1615" y="881" class="t" style="fill:#0000ff">53,61066</text>
<text x="10" y="846" class="t" style="fill:#009933">RSI(1) 14=53,61066</text>
<g shape-rendering="geometricPrecision" text-rendering="geometricPrecision">
<text x="1125.5" y="173.5" class="an" style="font-size:12px" textLength="241.5" lengthAdjust="spacingAndGlyphs">Ligne de tendance lue et tracée en M10</text>
<text x="536" y="468.5" class="an" style="font-size:13.4px" textLength="154" lengthAdjust="spacingAndGlyphs">ACHAT: SMI en surachat</text>
<line x1="698" y1="466.5" x2="797.5" y2="480.5" stroke="#111" stroke-width="1.6"/>
<text x="500" y="682" class="an" style="font-size:12.8px" textLength="199" lengthAdjust="spacingAndGlyphs">ACHAT: Stoch RSI en roisement</text>
<line x1="707.5" y1="681" x2="808.5" y2="727.5" stroke="#111" stroke-width="2"/>
<text x="1137.5" y="678" class="an" style="font-size:12.8px" textLength="155.0" lengthAdjust="spacingAndGlyphs">VENTE: SMI en survente</text>
<line x1="988" y1="660.5" x2="1126" y2="676.5" stroke="#111" stroke-width="2"/>
<text x="443.5" y="833" class="an" style="font-size:12.3px" textLength="191.0" lengthAdjust="spacingAndGlyphs">Prépa ACHAT: RSI en Surachat</text>
<line x1="641.5" y1="833" x2="696" y2="845.5" stroke="#111" stroke-width="1.6"/>
<text x="1145.5" y="825" class="an" style="font-size:12.8px" textLength="41.5" lengthAdjust="spacingAndGlyphs">VENTE</text>
<text x="1063.5" y="840" class="an" style="font-size:12.8px" textLength="289.0" lengthAdjust="spacingAndGlyphs">Stoch RSI en Survente, prêt au retournement</text>
<line x1="987" y1="810" x2="1051.5" y2="836" stroke="#111" stroke-width="2"/>
<text x="865.5" y="890" class="an" style="font-size:12.8px" textLength="42.0" lengthAdjust="spacingAndGlyphs">VENTE</text>
<text x="844.5" y="905.5" class="an" style="font-size:12.8px" textLength="100.5" lengthAdjust="spacingAndGlyphs">RSI en Survente</text>
<line x1="920.5" y1="913" x2="962.5" y2="943" stroke="#111" stroke-width="2"/>
</g>
</svg>
<svg width="1680" height="120" viewBox="0 0 1680 120" style="position:absolute;left:0;top:0;will-change:transform" font-family="Liberation Sans, Arial, sans-serif">
<defs><linearGradient id="bg" x1="0" y1="0" x2="0" y2="1"><stop offset="0" stop-color="#ffffff"/><stop offset="1" stop-color="#dedeee"/></linearGradient><linearGradient id="wb" x1="0" y1="0" x2="0" y2="1"><stop offset="0" stop-color="#ffffff"/><stop offset="1" stop-color="#e2e2ee"/></linearGradient></defs>
<rect x="26.5" y="48.5" width="45" height="14" rx="2" fill="url(#bg)" stroke="#9c9cbc"/>
<text x="49.0" y="58" font-size="9" text-anchor="middle" fill="#000">New</text>
<rect x="78.5" y="48.5" width="44" height="14" rx="2" fill="url(#bg)" stroke="#d4d4e4"/>
<text x="100.5" y="58" font-size="9" text-anchor="middle" fill="#b8b8b8">Save</text>
<rect x="128.5" y="48.5" width="45" height="14" rx="2" fill="url(#bg)" stroke="#9c9cbc"/>
<text x="151.0" y="58" font-size="9" text-anchor="middle" fill="#000">Save as..</text>
<rect x="189.5" y="47.5" width="15" height="15" rx="2" fill="#b6b6d4" stroke="#9c9cbc"/>
<rect x="193" y="50" width="3" height="10" fill="#ff5a00"/><rect x="194" y="48.5" width="1" height="13" fill="#ff5a00"/>
<rect x="198" y="50" width="3" height="9" fill="#6a9ad8"/><rect x="199" y="48.5" width="1" height="12" fill="#6a9ad8"/>
<rect x="209.5" y="47.5" width="15" height="15" rx="2" fill="url(#bg)" stroke="#9c9cbc"/>
<path d="M214.5 49 V61 M211.5 52.5 H214.5 M214.5 57.5 H217 M220.5 49 V61 M218 51.5 H220.5 M220.5 59.5 H223" stroke="#000" stroke-width="1.3" fill="none"/>
<rect x="229.5" y="47.5" width="15" height="15" rx="2" fill="url(#bg)" stroke="#9c9cbc"/>
<path d="M230.5 57.5 L234.5 53 L238.5 57 L244 51" stroke="#2a5ac0" stroke-width="1.3" fill="none"/>
<rect x="259.5" y="47.5" width="15" height="15" rx="2" fill="url(#bg)" stroke="#9c9cbc"/>
<text x="267" y="60" font-size="13" text-anchor="middle" fill="#222">T</text>
<rect x="279.5" y="47.5" width="15" height="15" rx="2" fill="#b6b6d4" stroke="#9c9cbc"/>
<text x="287" y="60" font-size="13" text-anchor="middle" fill="#222">1</text>
<rect x="299.5" y="47.5" width="15" height="15" rx="2" fill="url(#bg)" stroke="#9c9cbc"/>
<text x="307" y="60" font-size="13" text-anchor="middle" fill="#222">5</text>
<rect x="319.5" y="47.5" width="15" height="15" rx="2" fill="url(#bg)" stroke="#9c9cbc"/>
<text x="327" y="60" font-size="13" text-anchor="middle" fill="#222" textLength="13" lengthAdjust="spacingAndGlyphs">10</text>
<rect x="339.5" y="47.5" width="15" height="15" rx="2" fill="url(#bg)" stroke="#9c9cbc"/>
<text x="347" y="60" font-size="13" text-anchor="middle" fill="#222" textLength="13" lengthAdjust="spacingAndGlyphs">15</text>
<rect x="359.5" y="47.5" width="15" height="15" rx="2" fill="url(#bg)" stroke="#9c9cbc"/>
<text x="367" y="60" font-size="13" text-anchor="middle" fill="#222" textLength="13" lengthAdjust="spacingAndGlyphs">30</text>
<rect x="379.5" y="47.5" width="15" height="15" rx="2" fill="url(#bg)" stroke="#9c9cbc"/>
<text x="387" y="60" font-size="13" text-anchor="middle" fill="#222" textLength="13" lengthAdjust="spacingAndGlyphs">1H</text>
<rect x="399.5" y="47.5" width="15" height="15" rx="2" fill="url(#bg)" stroke="#9c9cbc"/>
<text x="407" y="60" font-size="13" text-anchor="middle" fill="#222" textLength="13" lengthAdjust="spacingAndGlyphs">2H</text>
<rect x="419.5" y="47.5" width="15" height="15" rx="2" fill="url(#bg)" stroke="#9c9cbc"/>
<text x="427" y="60" font-size="13" text-anchor="middle" fill="#222" textLength="13" lengthAdjust="spacingAndGlyphs">4H</text>
<rect x="439.5" y="47.5" width="15" height="15" rx="2" fill="url(#bg)" stroke="#9c9cbc"/>
<text x="447" y="60" font-size="13" text-anchor="middle" fill="#222" textLength="13" lengthAdjust="spacingAndGlyphs">8H</text>
<rect x="459.5" y="47.5" width="15" height="15" rx="2" fill="url(#bg)" stroke="#9c9cbc"/>
<text x="467" y="60" font-size="13" text-anchor="middle" fill="#222">D</text>
<rect x="479.5" y="47.5" width="15" height="15" rx="2" fill="url(#bg)" stroke="#9c9cbc"/>
<text x="487" y="60" font-size="13" text-anchor="middle" fill="#222">W</text>
<rect x="499.5" y="47.5" width="15" height="15" rx="2" fill="url(#bg)" stroke="#9c9cbc"/>
<text x="507" y="60" font-size="13" text-anchor="middle" fill="#222">M</text>
<rect x="529.5" y="47.5" width="15" height="15" rx="2" fill="#b6b6d4" stroke="#9c9cbc"/>
<path d="M536.5 49 V61 M531 56.5 H543" stroke="#000" stroke-width="1.4" fill="none"/>
<rect x="549.5" y="47.5" width="15" height="15" rx="2" fill="url(#bg)" stroke="#9c9cbc"/>
<rect x="550" y="49" width="14" height="12" fill="#fff"/><path d="M554.5 48 V62 M560.5 48 V62 M550 52.5 H564 M550 58.5 H564" stroke="#000" stroke-width="1.3" fill="none"/>
<rect x="569.5" y="47.5" width="15" height="15" rx="2" fill="url(#bg)" stroke="#9c9cbc"/>
<text x="577" y="60" font-size="13" font-weight="bold" text-anchor="middle" font-family="Liberation Mono, monospace" fill="#000">i</text>
<rect x="589.5" y="47.5" width="15" height="15" rx="2" fill="url(#bg)" stroke="#9c9cbc"/>
<path d="M591 55 l4 -3 v6 z M603 55 l-4 -3 v6 z" fill="#000"/><rect x="596" y="54.5" width="1" height="1" fill="#4a7ad0"/><rect x="598" y="54.5" width="1" height="1" fill="#4a7ad0"/>
<rect x="609.5" y="47.5" width="15" height="15" rx="2" fill="url(#bg)" stroke="#9c9cbc"/>
<text x="617" y="55" font-size="8.5" font-weight="bold" text-anchor="middle" fill="#000" textLength="12" lengthAdjust="spacingAndGlyphs">vol</text><rect x="611" y="58" width="12" height="3" fill="#2a4ab0"/><path d="M613.5 56 v2 M616.5 56 v2 M619.5 56 v2 M622.5 56 v2" stroke="#2a4ab0"/>
<rect x="639.5" y="47.5" width="15" height="15" rx="2" fill="url(#bg)" stroke="#9c9cbc"/>
<path d="M647 48.5 c-3 0 -4 3 -4 6 c0 3 -1 4 -2.5 5.5 h13 c-1.500 -1.500 -2.500 -2.500 -2.500 -5.500 c0 -3 -1 -6 -4 -6 z" fill="#e6eaf6" stroke="#7a92c4" stroke-width="1.1"/><rect x="645.5" y="60" width="3" height="1.500" fill="#7a92c4"/>
<rect x="659.5" y="47.5" width="15" height="15" rx="2" fill="url(#bg)" stroke="#9c9cbc"/>
<path d="M662.500 49 V61 M660.500 50.500 H662.500 M662.500 58 L674 52" stroke="#000" stroke-width="1.2" fill="none"/>
<rect x="679.5" y="47.5" width="15" height="15" rx="2" fill="url(#bg)" stroke="#9c9cbc"/>
<path d="M682.500 49 V61 M680.500 52 H682.500 M682.500 49.500 L694 56" stroke="#000" stroke-width="1.2" fill="none"/>
<rect x="699.5" y="47.5" width="15" height="15" rx="2" fill="url(#bg)" stroke="#9c9cbc"/>
<path d="M702.500 49 V61 M708.500 49 V61 M700 52.500 H712 M702.500 57.500 H705 M708.500 57.500 H711" stroke="#000" stroke-width="1.3" fill="none"/>
<rect x="719.5" y="47.5" width="15" height="15" rx="2" fill="url(#bg)" stroke="#9c9cbc"/>
<path d="M720.500 49.500 L729 55" stroke="#000" stroke-width="1.1"/><path d="M731 52.500 l-1.500 9 l-2 -3.500 l-3.500 0.500 z" fill="#000"/>
<rect x="749.5" y="47.5" width="15" height="15" rx="2" fill="url(#bg)" stroke="#9c9cbc"/>
<path d="M750.500 57 L763.500 50" stroke="#222" stroke-width="1.1"/><path d="M750.500 61 L763.500 54.500" stroke="#b0b0a0" stroke-width="1.1"/>
<rect x="769.5" y="47.5" width="15" height="15" rx="2" fill="url(#bg)" stroke="#9c9cbc"/>
<path d="M772 50 L782 60 M782 50 L772 60" stroke="#ff6a10" stroke-width="2.600" fill="none"/>
<rect x="789.5" y="47.5" width="15" height="15" rx="2" fill="url(#bg)" stroke="#9c9cbc"/>
<path d="M791 49 l4 4 m0 -4 l-4 4" stroke="#ff6a10" stroke-width="1.600"/><text x="799" y="61" font-size="9" font-weight="bold" text-anchor="middle" fill="#000">all</text>
<rect x="819.5" y="47.5" width="15" height="15" rx="2" fill="url(#bg)" stroke="#9c9cbc"/>
<rect x="824.500" y="50.500" width="6" height="5" fill="#fff" stroke="#000" stroke-width="1.200"/><path d="M826 52.500 h3" stroke="#000"/><path d="M821.500 55 v4.500 h12 v-4.500" fill="none" stroke="#000" stroke-width="1.400"/><rect x="822" y="60" width="12" height="1.200" fill="#3a6ac8"/>
<rect x="839.5" y="47.5" width="15" height="15" rx="2" fill="url(#bg)" stroke="#9c9cbc"/>
<path d="M842.500 49.500 h6 l3 3 v9 h-9 z" fill="#fff" stroke="#999" stroke-width="0.800"/><circle cx="849" cy="57" r="2.800" fill="#fff" stroke="#000" stroke-width="1.200"/><path d="M851 59 l3 3" stroke="#000" stroke-width="1.600"/>
<rect x="869.5" y="47.5" width="15" height="15" rx="2" fill="url(#bg)" stroke="#9c9cbc"/>
<circle cx="878.500" cy="52.500" r="3" fill="#fff" stroke="#000" stroke-width="1.200"/><path d="M880.500 55 l3.500 3.500" stroke="#000" stroke-width="1.600"/><path d="M871 58.500 h5 M873.500 56 v5" stroke="#ff6a10" stroke-width="1.100"/>
<rect x="889.5" y="47.5" width="15" height="15" rx="2" fill="url(#bg)" stroke="#9c9cbc"/>
<circle cx="898.500" cy="52.500" r="3" fill="#fff" stroke="#000" stroke-width="1.200"/><path d="M900.500 55 l3.500 3.500" stroke="#000" stroke-width="1.600"/><path d="M891 58.500 h5" stroke="#4a8ad8" stroke-width="1.100"/>
<rect x="909.500" y="48.500" width="14" height="13" fill="#ececf4" stroke="none"/><path d="M910 49.500 h14 M910 60.500 h14" stroke="#d0d0d0" stroke-width="1.500"/><path d="M914.500 54 l2.500 -2.500 l2.500 2.500 z M914.500 56 l2.500 2.500 l2.500 -2.500 z" fill="#d0d0d0"/>
<rect x="1632.500" y="47.500" width="15" height="13" rx="2" fill="#b6b6d4" stroke="#a0a0c0"/><path d="M1635 54.500 h4 M1639.500 50 v9 M1639.500 51 h6 l-2 3.500 l2 3.500 h-6" stroke="#8890b0" stroke-width="1" fill="#e8e8f4"/>
<rect x="1622.5" y="5.5" width="14" height="12" rx="2" fill="url(#wb)" stroke="#a4a4b4"/>
<path d="M1626.0 11.5 h7" stroke="#555" stroke-width="1"/>
<rect x="1640.5" y="5.5" width="14" height="12" rx="2" fill="url(#wb)" stroke="#a4a4b4"/>
<rect x="1646.0" y="8.0" width="5" height="4" fill="none" stroke="#444" stroke-width="0.9"/><rect x="1644.0" y="11.0" width="5" height="4" fill="#f4f4f8" stroke="#444" stroke-width="0.9"/>
<rect x="1658.5" y="5.5" width="14" height="12" rx="2" fill="url(#wb)" stroke="#a4a4b4"/>
<path d="M1662.5 8.5 l6 6 m0 -6 l-6 6" stroke="#555" stroke-width="0.9"/>
<rect x="1619.5" y="95.5" width="14" height="12" rx="2" fill="url(#wb)" stroke="#a4a4b4"/>
<path d="M1623.0 101.5 h7" stroke="#555" stroke-width="1"/>
<rect x="1637.5" y="95.5" width="14" height="12" rx="2" fill="url(#wb)" stroke="#a4a4b4"/>
<rect x="1643.0" y="98.0" width="5" height="4" fill="none" stroke="#444" stroke-width="0.9"/><rect x="1641.0" y="101.0" width="5" height="4" fill="#f4f4f8" stroke="#444" stroke-width="0.9"/>
<rect x="1655.5" y="95.5" width="14" height="12" rx="2" fill="url(#wb)" stroke="#a4a4b4"/>
<path d="M1659.5 98.5 l6 6 m0 -6 l-6 6" stroke="#555" stroke-width="0.9"/>
<rect x="6" y="7" width="1" height="1" fill="#c8c0b0"/><rect x="8" y="7" width="1" height="1" fill="#c8c0b0"/><rect x="10" y="7" width="1" height="1" fill="#c8c0b0"/><rect x="12" y="7" width="1" height="1" fill="#c8c0b0"/><rect x="14" y="7" width="1" height="1" fill="#c8c0b0"/><rect x="16" y="7" width="1" height="1" fill="#555"/><rect x="18" y="7" width="1" height="1" fill="#555"/><rect x="20" y="7" width="1" height="1" fill="#555"/><rect x="6" y="9" width="1" height="1" fill="#c8c0b0"/><rect x="8" y="9" width="1" height="1" fill="#c8c0b0"/><rect x="10" y="9" width="1" height="1" fill="#c8c0b0"/><rect x="12" y="9" width="1" height="1" fill="#c8c0b0"/><rect x="14" y="9" width="1" height="1" fill="#555"/><rect x="16" y="9" width="1" height="1" fill="#555"/><rect x="18" y="9" width="1" height="1" fill="#555"/><rect x="20" y="9" width="1" height="1" fill="#555"/><rect x="6" y="11" width="1" height="1" fill="#c8c0b0"/><rect x="8" y="11" width="1" height="1" fill="#c8c0b0"/><rect x="10" y="11" width="1" height="1" fill="#c8c0b0"/><rect x="12" y="11" width="1" height="1" fill="#555"/><rect x="14" y="11" width="1" height="1" fill="#555"/><rect x="16" y="11" width="1" height="1" fill="#555"/><rect x="18" y="11" width="1" height="1" fill="#555"/><rect x="20" y="11" width="1" height="1" fill="#555"/><rect x="6" y="13" width="1" height="1" fill="#c8c0b0"/><rect x="8" y="13" width="1" height="1" fill="#c8c0b0"/><rect x="10" y="13" width="1" height="1" fill="#555"/><rect x="12" y="13" width="1" height="1" fill="#555"/><rect x="14" y="13" width="1" height="1" fill="#555"/><rect x="16" y="13" width="1" height="1" fill="#555"/><rect x="18" y="13" width="1" height="1" fill="#555"/><rect x="20" y="13" width="1" height="1" fill="#555"/><rect x="6" y="15" width="1" height="1" fill="#c8c0b0"/><rect x="8" y="15" width="1" height="1" fill="#555"/><rect x="10" y="15" width="1" height="1" fill="#555"/><rect x="12" y="15" width="1" height="1" fill="#555"/><rect x="14" y="15" width="1" height="1" fill="#555"/><rect x="16" y="15" width="1" height="1" fill="#555"/><rect x="18" y="15" width="1" height="1" fill="#555"/><rect x="20" y="15" width="1" height="1" fill="#555"/><rect x="6" y="17" width="1" height="1" fill="#555"/><rect x="8" y="17" width="1" height="1" fill="#555"/><rect x="10" y="17" width="1" height="1" fill="#555"/><rect x="12" y="17" width="1" height="1" fill="#555"/><rect x="14" y="17" width="1" height="1" fill="#555"/><rect x="16" y="17" width="1" height="1" fill="#555"/><rect x="18" y="17" width="1" height="1" fill="#555"/><rect x="20" y="17" width="1" height="1" fill="#555"/>
<rect x="10" y="98" width="1" height="1" fill="#c8c0b0"/><rect x="12" y="98" width="1" height="1" fill="#c8c0b0"/><rect x="14" y="98" width="1" height="1" fill="#c8c0b0"/><rect x="16" y="98" width="1" height="1" fill="#c8c0b0"/><rect x="18" y="98" width="1" height="1" fill="#c8c0b0"/><rect x="20" y="98" width="1" height="1" fill="#555"/><rect x="22" y="98" width="1" height="1" fill="#555"/><rect x="24" y="98" width="1" height="1" fill="#555"/><rect x="10" y="100" width="1" height="1" fill="#c8c0b0"/><rect x="12" y="100" width="1" height="1" fill="#c8c0b0"/><rect x="14" y="100" width="1" height="1" fill="#c8c0b0"/><rect x="16" y="100" width="1" height="1" fill="#c8c0b0"/><rect x="18" y="100" width="1" height="1" fill="#555"/><rect x="20" y="100" width="1" height="1" fill="#555"/><rect x="22" y="100" width="1" height="1" fill="#555"/><rect x="24" y="100" width="1" height="1" fill="#555"/><rect x="10" y="102" width="1" height="1" fill="#c8c0b0"/><rect x="12" y="102" width="1" height="1" fill="#c8c0b0"/><rect x="14" y="102" width="1" height="1" fill="#c8c0b0"/><rect x="16" y="102" width="1" height="1" fill="#555"/><rect x="18" y="102" width="1" height="1" fill="#555"/><rect x="20" y="102" width="1" height="1" fill="#555"/><rect x="22" y="102" width="1" height="1" fill="#555"/><rect x="24" y="102" width="1" height="1" fill="#555"/><rect x="10" y="104" width="1" height="1" fill="#c8c0b0"/><rect x="12" y="104" width="1" height="1" fill="#c8c0b0"/><rect x="14" y="104" width="1" height="1" fill="#555"/><rect x="16" y="104" width="1" height="1" fill="#555"/><rect x="18" y="104" width="1" height="1" fill="#555"/><rect x="20" y="104" width="1" height="1" fill="#555"/><rect x="22" y="104" width="1" height="1" fill="#555"/><rect x="24" y="104" width="1" height="1" fill="#555"/><rect x="10" y="106" width="1" height="1" fill="#c8c0b0"/><rect x="12" y="106" width="1" height="1" fill="#555"/><rect x="14" y="106" width="1" height="1" fill="#555"/><rect x="16" y="106" width="1" height="1" fill="#555"/><rect x="18" y="106" width="1" height="1" fill="#555"/><rect x="20" y="106" width="1" height="1" fill="#555"/><rect x="22" y="106" width="1" height="1" fill="#555"/><rect x="24" y="106" width="1" height="1" fill="#555"/><rect x="10" y="108" width="1" height="1" fill="#555"/><rect x="12" y="108" width="1" height="1" fill="#555"/><rect x="14" y="108" width="1" height="1" fill="#555"/><rect x="16" y="108" width="1" height="1" fill="#555"/><rect x="18" y="108" width="1" height="1" fill="#555"/><rect x="20" y="108" width="1" height="1" fill="#555"/><rect x="22" y="108" width="1" height="1" fill="#555"/><rect x="24" y="108" width="1" height="1" fill="#555"/>
</svg>
</body></html>
